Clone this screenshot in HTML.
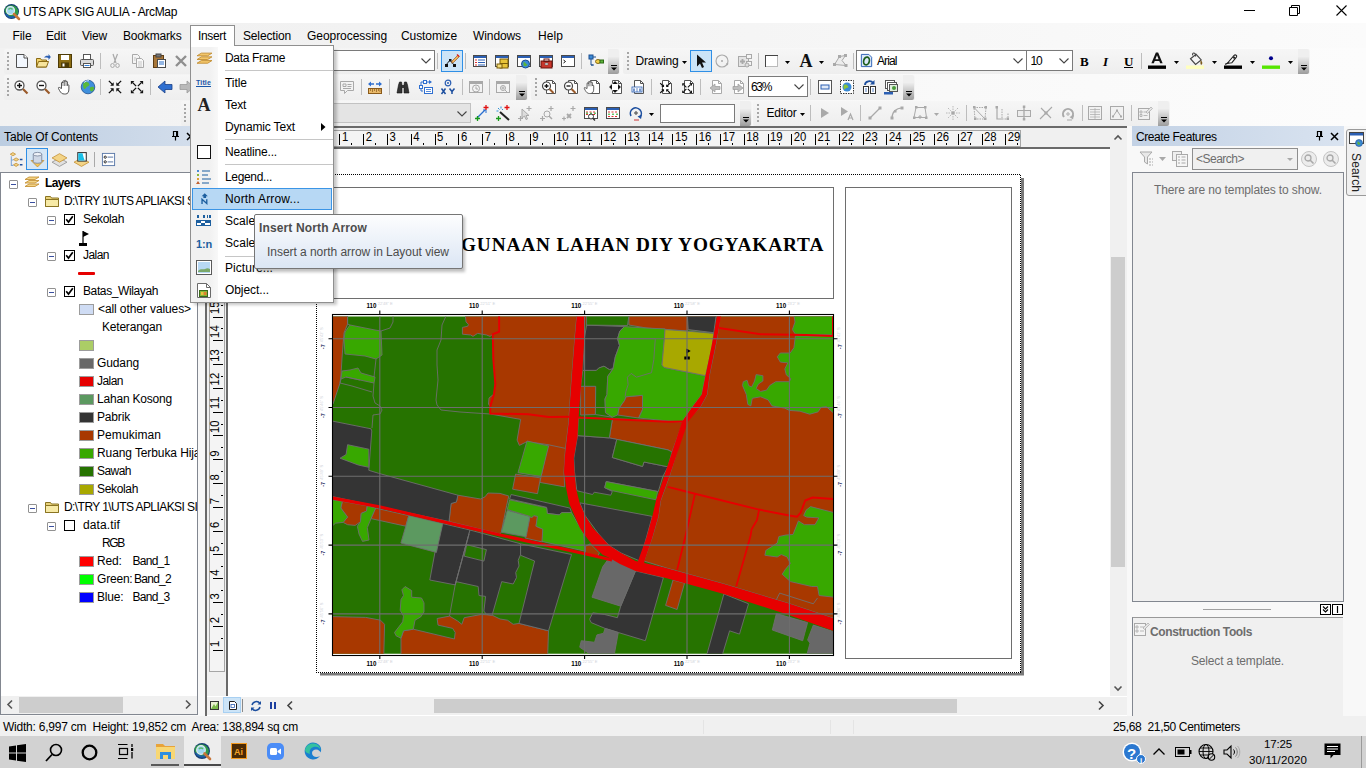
<!DOCTYPE html>
<html lang="en">
<head>
<meta charset="utf-8">
<title>UTS APK SIG AULIA - ArcMap</title>
<style>
*{box-sizing:border-box;margin:0;padding:0}
html,body{width:1366px;height:768px;overflow:hidden;background:#f0f0f0;font-family:"Liberation Sans","DejaVu Sans",sans-serif;font-size:12px;color:#000}
#app{position:relative;width:1366px;height:768px;overflow:hidden;background:#f8f8f8}
.a{position:absolute}
.x{position:absolute;white-space:pre}
svg{overflow:visible}
</style>
</head>
<body>
<div id="app">
<!-- chrome -->
<div class="a" style="left:0px;top:0px;width:1366px;height:23px;background:#fff;"></div>
<svg class="a" style="left:3px;top:3px;" width="18" height="18" viewBox="0 0 18 18"><circle cx="8.500" cy="8.500" r="7.500" fill="#173f73"/><path d="M2.500 5c2-2.500 6-3.500 9-2 2 1 3 2.500 3.500 4 .8 3 0 5-2.500 6-3 1.500-6 1-8-1S.500 8 2.500 5z" fill="#2f9a4a"/><path d="M3 11c2 3 5.500 4 8.500 2.500" stroke="#1d5fa8" stroke-width="2" fill="none"/><circle cx="7.500" cy="7.500" r="4" fill="#9fd8f2" stroke="#e4ebef" stroke-width="1.200"/><path d="M5.500 6.500c1-1.500 3-1.500 4 0" stroke="#5ab86a" stroke-width="1.400" fill="none"/><path d="M11 11l5 5" stroke="#c8763a" stroke-width="2.500" stroke-linecap="round"/></svg>
<div class="x" style="left:23.0px;top:4.24px;font-size:12px;line-height:17px;letter-spacing:-0.336px;">UTS APK SIG AULIA - ArcMap</div>
<svg class="a" style="left:1244px;top:10px;" width="11" height="1" viewBox="0 0 11 1"><rect width="11" height="1" fill="#000"/></svg>
<svg class="a" style="left:1289px;top:5px;" width="12" height="12" viewBox="0 0 12 12"><path d="M.5 2.500h8v8h-8z" fill="none" stroke="#000"/><path d="M2.500 2.500v-2h8v8h-2" fill="none" stroke="#000"/></svg>
<svg class="a" style="left:1336px;top:5px;" width="11" height="11" viewBox="0 0 11 11"><path d="M.5.500l10 10M10.500.500l-10 10" stroke="#000" stroke-width="1.100"/></svg>
<div class="a" style="left:0px;top:23px;width:1366px;height:25px;background:linear-gradient(90deg,#f0f0f0,#f3f3f3 40%,#fbfbfb);"></div>
<div class="x" style="left:12.5px;top:28.24px;font-size:12px;line-height:17px;letter-spacing:-0.084px;">File</div>
<div class="x" style="left:46.0px;top:28.24px;font-size:12px;line-height:17px;letter-spacing:-0.170px;">Edit</div>
<div class="x" style="left:82.0px;top:28.24px;font-size:12px;line-height:17px;letter-spacing:-0.199px;">View</div>
<div class="x" style="left:123.0px;top:28.24px;font-size:12px;line-height:17px;letter-spacing:-0.169px;">Bookmarks</div>
<div class="x" style="left:243.0px;top:28.24px;font-size:12px;line-height:17px;letter-spacing:-0.152px;">Selection</div>
<div class="x" style="left:307.0px;top:28.24px;font-size:12px;line-height:17px;letter-spacing:-0.055px;">Geoprocessing</div>
<div class="x" style="left:401.0px;top:28.24px;font-size:12px;line-height:17px;letter-spacing:-0.076px;">Customize</div>
<div class="x" style="left:473.0px;top:28.24px;font-size:12px;line-height:17px;letter-spacing:-0.097px;">Windows</div>
<div class="x" style="left:538.0px;top:28.24px;font-size:12px;line-height:17px;letter-spacing:0.080px;">Help</div>
<div class="a" style="left:0px;top:48px;width:1366px;height:78px;background:linear-gradient(90deg,#f2f2f2,#f6f6f6 40%,#fcfcfc);"></div>
<div class="a" style="left:4px;top:49px;width:616px;height:25px;border-radius:2px;background:linear-gradient(#f6f6f6,#eeeeee);"></div>
<div class="a" style="left:7px;top:52px;width:2px;height:18px;background-image:repeating-linear-gradient(#a6a6a6 0 2px,transparent 2px 4px);"></div>
<svg class="a" style="left:13.5px;top:53px;" width="16" height="16" viewBox="0 0 16 16"><path d="M2.500 1.500h7.500l3.500 3.500v9.500h-11z" fill="#f2f7fe" stroke="#4f4f4f"/><path d="M10 1.500v3.500h3.500" fill="#fff" stroke="#4f4f4f"/></svg>
<svg class="a" style="left:35px;top:53px;" width="16" height="16" viewBox="0 0 16 16"><path d="M1.5 5.5h4l1 1.5h5v7h-10z" fill="#f1d26b" stroke="#8a6a14"/><path d="M1.5 14l2-5.5h10l-2 5.5z" fill="#f7e49c" stroke="#8a6a14"/><path d="M9 4.5c1.5-2 3-2.2 4.5-1.5v-2l2.3 3-2.3 3v-2c-1.5-.6-3-.5-4.500-.5z" fill="#2b5fb3"/></svg>
<svg class="a" style="left:57px;top:53px;" width="16" height="16" viewBox="0 0 16 16"><rect x="1.5" y="1.5" width="13" height="13" fill="#8d6e14" stroke="#4d3b07"/><rect x="4" y="2" width="8" height="5" fill="#fff"/><rect x="4" y="9.500" width="8" height="5" fill="#4d3b07"/><rect x="5.500" y="10.500" width="2" height="3" fill="#fff"/></svg>
<svg class="a" style="left:79px;top:53px;" width="16" height="16" viewBox="0 0 16 16"><rect x="4.500" y="1.500" width="7" height="5" fill="#fff" stroke="#555"/><rect x="1.500" y="6.500" width="13" height="6" rx="1" fill="#d9d9d9" stroke="#555"/><rect x="4.500" y="10.500" width="7" height="4" fill="#fff" stroke="#555"/><rect x="5.500" y="12" width="5" height="1" fill="#2b7bd6"/></svg>
<div class="a" style="left:100px;top:53px;width:1px;height:16px;background:#bdbdbd;"></div>
<svg class="a" style="left:107px;top:53px;" width="16" height="16" viewBox="0 0 16 16"><path d="M6 1l3 9M10.500 1l-3.500 9" stroke="#a9a9a9" fill="none" stroke-width="1.200"/><ellipse cx="5.500" cy="12.500" rx="1.800" ry="2" fill="none" stroke="#a9a9a9"/><ellipse cx="10.500" cy="12.500" rx="1.800" ry="2" fill="none" stroke="#a9a9a9"/></svg>
<svg class="a" style="left:130px;top:53px;" width="16" height="16" viewBox="0 0 16 16"><path d="M2.500 1.500h5l2 2v7h-7z" fill="#f4f4f4" stroke="#a9a9a9"/><path d="M6.500 5.500h5l2 2v7h-7z" fill="#f8f8f8" stroke="#a9a9a9"/><path d="M8 9h4M8 11h4M8 13h4M4 5h2M4 7h1.500" stroke="#b9b9b9" stroke-width=".800"/></svg>
<svg class="a" style="left:151px;top:53px;" width="16" height="16" viewBox="0 0 16 16"><rect x="2.500" y="2.500" width="10" height="12" fill="#a8773a" stroke="#5e3d14"/><rect x="5" y="1" width="5" height="3" fill="#777" stroke="#444"/><rect x="6.500" y="6.500" width="8" height="8" fill="#fff" stroke="#4a4a4a"/><path d="M8 9h5M8 11h5" stroke="#2b6fc9"/></svg>
<svg class="a" style="left:173px;top:53px;" width="16" height="16" viewBox="0 0 16 16"><path d="M3 3l10 10M13 3l-10 10" stroke="#8f8f8f" stroke-width="2.400"/></svg>
<div class="a" style="left:250px;top:50px;width:185px;height:21px;background:#fff;border:1px solid #7a7a7a;"></div>
<svg class="a" style="left:421px;top:58px;" width="10" height="6" viewBox="0 0 10 6"><path d="M.5.500l4.500 4.500 4.500-4.500" fill="none" stroke="#444" stroke-width="1.100"/></svg>
<div class="a" style="left:437px;top:53px;width:1px;height:16px;background:#bdbdbd;"></div>
<div class="a" style="left:441px;top:50px;width:22px;height:22px;background:#cce4f7;border:1px solid #2f8fe6;"></div>
<svg class="a" style="left:444px;top:53px;" width="16" height="16" viewBox="0 0 16 16"><path d="M2 12l4-5 4 5" fill="none" stroke="#222"/><rect x="1" y="11" width="3" height="3" fill="#111"/><rect x="5" y="6" width="2.500" height="2.500" fill="#111"/><rect x="9" y="11" width="3" height="3" fill="#111"/><path d="M8 8l6-6 1.500 1.500-6 6-2 .6z" fill="#f0b35a" stroke="#8a4a1a" stroke-width=".600"/><path d="M13 1.500l2 2" stroke="#d22" stroke-width="1.500"/></svg>
<div class="a" style="left:465px;top:53px;width:1px;height:16px;background:#bdbdbd;"></div>
<svg class="a" style="left:472px;top:53px;" width="16" height="16" viewBox="0 0 16 16"><rect x="1.5" y="2.5" width="13" height="11" fill="#fff" stroke="#4a4a4a"/><rect x="2" y="3" width="12" height="2" fill="#2b5fb3"/><path d="M3 7h2M3 9.500h2M3 12h2" stroke="#d33"/><path d="M6 7h7M6 9.500h7M6 12h7" stroke="#2b5fb3"/></svg>
<svg class="a" style="left:494px;top:53px;" width="16" height="16" viewBox="0 0 16 16"><rect x="1.5" y="2.5" width="13" height="11" fill="#fff" stroke="#4a4a4a"/><rect x="2" y="3" width="12" height="2" fill="#2b5fb3"/><rect x="6" y="6" width="8" height="9" fill="#e8c43a" stroke="#7a5d08"/><path d="M6 10.500h8" stroke="#7a5d08"/><rect x="3" y="11" width="5" height="4" fill="#f3dc7a" stroke="#7a5d08"/></svg>
<svg class="a" style="left:516px;top:53px;" width="16" height="16" viewBox="0 0 16 16"><rect x="1.5" y="2.5" width="13" height="11" fill="#fff" stroke="#4a4a4a"/><rect x="2" y="3" width="12" height="2" fill="#2b5fb3"/><circle cx="9.500" cy="11" r="4" fill="#3a8ad6" stroke="#1d4f8f"/><path d="M7.500 9c2 0 2 2 4 2.500-1 2-3 2-4 1z" fill="#5db53a"/></svg>
<svg class="a" style="left:538px;top:53px;" width="16" height="16" viewBox="0 0 16 16"><rect x="1.5" y="2.5" width="13" height="11" fill="#fff" stroke="#4a4a4a"/><rect x="2" y="3" width="12" height="2" fill="#2b5fb3"/><rect x="3" y="8" width="11" height="7" fill="#c8352b" stroke="#6b120d"/><rect x="6" y="6" width="5" height="2.500" fill="none" stroke="#6b120d"/><rect x="7" y="10" width="3" height="2" fill="#ddd" stroke="#555" stroke-width=".500"/></svg>
<svg class="a" style="left:560px;top:53px;" width="16" height="16" viewBox="0 0 16 16"><rect x="1.5" y="2.5" width="13" height="11" fill="#fff" stroke="#4a4a4a"/><rect x="2" y="3" width="12" height="2" fill="#2b5fb3"/><path d="M3.500 7l2 1.500-2 1.500" fill="none" stroke="#111"/></svg>
<div class="a" style="left:581px;top:53px;width:1px;height:16px;background:#bdbdbd;"></div>
<svg class="a" style="left:588px;top:53px;" width="16" height="16" viewBox="0 0 16 16"><rect x="1" y="2" width="4" height="4" fill="#3a8ad6" stroke="#1d4f8f"/><path d="M3 6v6h3M5 4h3" stroke="#1d4f8f" fill="none"/><ellipse cx="10" cy="8.500" rx="2.500" ry="2" fill="#f0cf4a" stroke="#8a6a14"/><rect x="12" y="7" width="3.500" height="3" fill="#5db53a" stroke="#2d6a15"/><path d="M3 12h2" stroke="#1d4f8f"/></svg>
<div class="a" style="left:608px;top:49px;width:11px;height:25px;background:linear-gradient(#efefef 30%,#9c9c9c);border-radius:0 2px 2px 0;"></div><svg class="a" style="left:610px;top:64px;" width="8" height="8" viewBox="0 0 8 8"><path d="M1 1.500h6" stroke="#000"/><path d="M1 3.500h6l-3 3z" fill="#000"/></svg>
<div class="a" style="left:623px;top:49px;width:687px;height:25px;border-radius:2px;background:linear-gradient(#f6f6f6,#eeeeee);"></div>
<div class="a" style="left:627px;top:52px;width:2px;height:18px;background-image:repeating-linear-gradient(#a6a6a6 0 2px,transparent 2px 4px);"></div>
<div class="x" style="left:635.5px;top:53.24px;font-size:12px;line-height:17px;letter-spacing:-0.145px;">Drawing</div>
<svg class="a" style="left:681.5px;top:60.5px;" width="5" height="3" viewBox="0 0 5 3"><path d="M0 0h5l-2.500 3z" fill="#000"/></svg>
<div class="a" style="left:690px;top:50px;width:22px;height:22px;background:#cce4f7;border:1px solid #2f8fe6;"></div>
<svg class="a" style="left:693px;top:53px;" width="16" height="16" viewBox="0 0 16 16"><path d="M4 1.500v12l3-3 2 4.500 2-1-2-4.500h4z" fill="#111"/></svg>
<svg class="a" style="left:714px;top:53px;" width="16" height="16" viewBox="0 0 16 16"><circle cx="8" cy="8" r="6" fill="none" stroke="#a9a9a9" stroke-width="1.100"/><circle cx="8" cy="8" r="1" fill="#a9a9a9"/><path d="M12 10l2.500.5-1 2z" fill="#a9a9a9"/></svg>
<svg class="a" style="left:737px;top:53px;" width="16" height="16" viewBox="0 0 16 16"><rect x="1.500" y="3.500" width="10" height="10" fill="#e4e4e4" stroke="#a9a9a9"/><path d="M3 8.500h5M5.500 6v5" stroke="#a9a9a9" stroke-width="1.800"/><rect x="9.500" y="1.500" width="5" height="4" fill="#f4f4f4" stroke="#a9a9a9"/><rect x="9.500" y="8.500" width="5" height="4" fill="#f4f4f4" stroke="#a9a9a9"/><circle cx="10" cy="12" r="2" fill="#ddd" stroke="#a9a9a9"/></svg>
<div class="a" style="left:758px;top:53px;width:1px;height:16px;background:#bdbdbd;"></div>
<svg class="a" style="left:764px;top:53px;" width="16" height="16" viewBox="0 0 16 16"><rect x="1.500" y="2.500" width="12" height="11" fill="#fff" stroke="#444"/><path d="M2 13.500h12M13.500 3v10.500" stroke="#bbb"/></svg>
<svg class="a" style="left:785px;top:60.5px;" width="5" height="3" viewBox="0 0 5 3"><path d="M0 0h5l-2.500 3z" fill="#000"/></svg>
<div class="x" style="left:799.5px;top:49.16px;font-size:18px;line-height:25px;letter-spacing:0.001px;font-weight:bold;color:#111;font-family:'Liberation Serif',serif;">A</div>
<svg class="a" style="left:819px;top:60.5px;" width="5" height="3" viewBox="0 0 5 3"><path d="M0 0h5l-2.500 3z" fill="#000"/></svg>
<svg class="a" style="left:832px;top:53px;" width="16" height="16" viewBox="0 0 16 16"><path d="M2.500 11.500l5-8 6-1-3.500 5 4 5z" fill="#ececec" stroke="#a9a9a9"/><rect x="1" y="10" width="3" height="3" fill="#a9a9a9"/><rect x="6" y="2" width="3" height="3" fill="#a9a9a9"/><rect x="12" y="1" width="3" height="3" fill="#a9a9a9"/><rect x="12.500" y="11" width="3" height="3" fill="#a9a9a9"/></svg>
<div class="a" style="left:853px;top:53px;width:1px;height:16px;background:#bdbdbd;"></div>
<div class="a" style="left:856px;top:50px;width:172px;height:21px;background:#fff;border:1px solid #7a7a7a;"></div>
<svg class="a" style="left:858.5px;top:53px;" width="15" height="15" viewBox="0 0 16 16"><path d="M2.500 1.500h8l3 3v10h-11z" fill="#dbe8fb" stroke="#2b5fb3"/><ellipse cx="8" cy="8.500" rx="3" ry="4.200" fill="none" stroke="#1e5e1e" stroke-width="1.800" transform="rotate(15 8 8.500)"/></svg>
<div class="x" style="left:877.0px;top:53.24px;font-size:12px;line-height:17px;letter-spacing:-0.902px;">Arial</div>
<svg class="a" style="left:1013px;top:58px;" width="10" height="6" viewBox="0 0 10 6"><path d="M.5.500l4.500 4.500 4.500-4.500" fill="none" stroke="#444" stroke-width="1.100"/></svg>
<div class="a" style="left:1026px;top:50px;width:47px;height:21px;background:#fff;border:1px solid #7a7a7a;"></div>
<div class="x" style="left:1030.5px;top:53.24px;font-size:12px;line-height:17px;letter-spacing:-1.174px;">10</div>
<svg class="a" style="left:1059px;top:58px;" width="10" height="6" viewBox="0 0 10 6"><path d="M.5.500l4.500 4.500 4.500-4.500" fill="none" stroke="#444" stroke-width="1.100"/></svg>
<div class="x" style="left:1080.0px;top:53.40px;font-size:13px;line-height:18px;letter-spacing:-0.171px;font-weight:bold;font-family:'Liberation Serif',serif;">B</div>
<div class="x" style="left:1103.0px;top:53.40px;font-size:13px;line-height:18px;letter-spacing:-0.059px;font-weight:bold;font-style:italic;font-family:'Liberation Serif',serif;">I</div>
<div class="x" style="left:1124.0px;top:53.40px;font-size:13px;line-height:18px;letter-spacing:-0.388px;font-weight:bold;font-family:'Liberation Serif',serif;text-decoration:underline;">U</div>
<div class="a" style="left:1141px;top:53px;width:1px;height:16px;background:#bdbdbd;"></div>
<svg class="a" style="left:1148px;top:52px;" width="18" height="18" viewBox="0 0 16 16"><path d="M3 10h2.200l.8-2h4l.8 2H13L9 0.500H7zM6.600 6.400L8 2.800l1.400 3.600z" fill="#111"/><rect x="0" y="12" width="16" height="3" fill="#000"/></svg>
<svg class="a" style="left:1173.5px;top:60.5px;" width="5" height="3" viewBox="0 0 5 3"><path d="M0 0h5l-2.500 3z" fill="#000"/></svg>
<svg class="a" style="left:1186px;top:52px;" width="18" height="18" viewBox="0 0 16 16"><path d="M4 6l5-4 4.500 5-5 4z" fill="#f4f4f4" stroke="#444"/><path d="M6 3c-1-3 3-3 2.500 1" fill="none" stroke="#444"/><path d="M13 7c1.500 1.500 2 3 1 4s-1.500-1-1-4z" fill="#7a5a1a"/><rect x="0" y="12" width="16" height="3" fill="#ffffbe"/></svg>
<svg class="a" style="left:1211.5px;top:60.5px;" width="5" height="3" viewBox="0 0 5 3"><path d="M0 0h5l-2.500 3z" fill="#000"/></svg>
<svg class="a" style="left:1224px;top:52px;" width="18" height="18" viewBox="0 0 16 16"><path d="M3 10l6-7c1-1 3 0 2 1.500l-4 5z" fill="#fff" stroke="#222"/><circle cx="9" cy="5" r="1" fill="#222"/><path d="M1 11l3-1.500" stroke="#222"/><rect x="0" y="12" width="16" height="3" fill="#000"/></svg>
<svg class="a" style="left:1249.5px;top:60.5px;" width="5" height="3" viewBox="0 0 5 3"><path d="M0 0h5l-2.500 3z" fill="#000"/></svg>
<svg class="a" style="left:1262px;top:52px;" width="18" height="18" viewBox="0 0 16 16"><circle cx="8" cy="5.500" r="1.800" fill="#00008b"/><rect x="0" y="12" width="16" height="3" fill="#55e600"/></svg>
<svg class="a" style="left:1287.5px;top:60.5px;" width="5" height="3" viewBox="0 0 5 3"><path d="M0 0h5l-2.500 3z" fill="#000"/></svg>
<div class="a" style="left:1298px;top:49px;width:11px;height:25px;background:linear-gradient(#efefef 30%,#9c9c9c);border-radius:0 2px 2px 0;"></div><svg class="a" style="left:1300px;top:64px;" width="8" height="8" viewBox="0 0 8 8"><path d="M1 1.500h6" stroke="#000"/><path d="M1 3.500h6l-3 3z" fill="#000"/></svg>
<div class="a" style="left:4px;top:75px;width:524px;height:25px;border-radius:2px;background:linear-gradient(#f6f6f6,#eeeeee);"></div>
<div class="a" style="left:7px;top:78px;width:2px;height:18px;background-image:repeating-linear-gradient(#a6a6a6 0 2px,transparent 2px 4px);"></div>
<svg class="a" style="left:12.5px;top:79px;" width="16" height="16" viewBox="0 0 16 16"><circle cx="6.500" cy="6.500" r="4.500" fill="#fff" stroke="#555" stroke-width="1.300"/><path d="M10 10l4.500 4.500" stroke="#9a5a2a" stroke-width="2.200"/><path d="M4 6.500h5M6.500 4v5" stroke="#111" stroke-width="1.400"/></svg>
<svg class="a" style="left:34.5px;top:79px;" width="16" height="16" viewBox="0 0 16 16"><circle cx="6.500" cy="6.500" r="4.500" fill="#fff" stroke="#555" stroke-width="1.300"/><path d="M10 10l4.500 4.500" stroke="#9a5a2a" stroke-width="2.200"/><path d="M4 6.500h5" stroke="#111" stroke-width="1.400"/></svg>
<svg class="a" style="left:56.5px;top:79px;" width="16" height="16" viewBox="0 0 16 16"><path d="M4.500 9.500V4c0-1 1.400-1 1.400 0V2.500c0-1 1.500-1 1.500 0V2c0-1 1.500-1 1.500 0v1c0-1 1.500-1 1.500 0v3.500c0-1 1.500-1 1.500 0V10c0 3-1 5-3.500 5h-1C5 15 4 14 2.500 11.500L1.500 9.500c-.5-1 .6-1.600 1.300-.8z" fill="#fff" stroke="#3f3f3f" stroke-width=".900"/><path d="M6 3v4M7.500 2.500v4.500M9 3v4" stroke="#3f3f3f" stroke-width=".600"/></svg>
<svg class="a" style="left:79.5px;top:79px;" width="16" height="16" viewBox="0 0 16 16"><circle cx="8" cy="8" r="6.800" fill="#3f8fdc" stroke="#1d4f8f" stroke-width=".800"/><path d="M3.500 4c2-1.500 4.500-1 5.500.5s0 2.500-1.500 3-2 3-3 2.500-2-4-1-6zM10 8.500c1-1 3.500-1 4 0s-1 4-2.500 4-2-3-1.500-4z" fill="#58b83a"/><path d="M4 3.500a6 6 0 0 1 5-1.800" stroke="#cfe6fb" fill="none"/></svg>
<div class="a" style="left:100px;top:79px;width:1px;height:16px;background:#bdbdbd;"></div>
<svg class="a" style="left:108px;top:80px;" width="14" height="14" viewBox="0 0 16 16"><path d="M1 1l4 4M15 1l-4 4M1 15l4-4M15 15l-4-4" stroke="#111" stroke-width="1.600"/><path d="M6.500 2.500v4h-4zM9.500 2.500v4h4zM6.500 13.500v-4h-4zM9.500 13.500v-4h4z" fill="#111"/></svg>
<svg class="a" style="left:130px;top:80px;" width="14" height="14" viewBox="0 0 16 16"><path d="M3 3l4 4M13 3l-4 4M3 13l4-4M13 13l-4-4" stroke="#111" stroke-width="1.600"/><path d="M1 5V1h4zM15 5V1h-4zM1 11v4h4zM15 11v4h-4z" fill="#111"/></svg>
<div class="a" style="left:150px;top:79px;width:1px;height:16px;background:#bdbdbd;"></div>
<svg class="a" style="left:157px;top:79px;" width="16" height="16" viewBox="0 0 16 16"><path d="M1 8l7-6v3.500h7v5H8V14z" fill="#2f6fd0" stroke="#1a3f86" stroke-width=".800"/></svg>
<svg class="a" style="left:179px;top:79px;" width="16" height="16" viewBox="0 0 16 16"><path d="M15 8l-7-6v3.500H1v5h7V14z" fill="#b9b9b9" stroke="#9a9a9a" stroke-width=".800"/></svg>
<svg class="a" style="left:339px;top:79px;" width="16" height="16" viewBox="0 0 16 16"><path d="M1.500 2.500h13v9h-6l-3 3v-3h-4z" fill="#f3f3f3" stroke="#a9a9a9"/><path d="M4 5h3v2.500H4zM8.500 5.500h4M8.500 7.500h4M4 9.500h8" stroke="#a9a9a9" fill="none"/></svg>
<div class="a" style="left:361px;top:79px;width:1px;height:16px;background:#bdbdbd;"></div>
<svg class="a" style="left:367px;top:79px;" width="16" height="16" viewBox="0 0 16 16"><rect x="1.500" y="9.500" width="13" height="5" fill="#e9b96a" stroke="#8a5a1a"/><path d="M3.500 10v2M5.500 10v3M7.500 10v2M9.500 10v3M11.500 10v2M13 10v3" stroke="#8a5a1a" stroke-width=".700"/><path d="M1 5l3-2.500v5zM15 5l-3-2.500v5z" fill="#2f6fd0"/><path d="M4 5h3M9 5h3" stroke="#2f6fd0" stroke-width="1.500"/></svg>
<div class="a" style="left:389px;top:79px;width:1px;height:16px;background:#bdbdbd;"></div>
<svg class="a" style="left:395px;top:79px;" width="16" height="16" viewBox="0 0 16 16"><path d="M2 14l1.500-8 1-3h2l.5 3v8zM14 14l-1.500-8-1-3h-2L9 6v8z" fill="#333" stroke="#111" stroke-width=".600"/><rect x="6.500" y="6" width="3" height="3" fill="#333"/></svg>
<svg class="a" style="left:418px;top:79px;" width="16" height="16" viewBox="0 0 16 16"><rect x="1.500" y="6.500" width="3" height="3" fill="#fff" stroke="#2f6fd0"/><rect x="5.500" y="1.500" width="3" height="3" fill="#fff" stroke="#2f6fd0"/><path d="M3 6.500V3h2.500M8.500 3h4M3 9.500V12h2" stroke="#2f6fd0" fill="none"/><path d="M11 1l3 2-3 2z" fill="#2f6fd0"/><rect x="6.500" y="8.500" width="8" height="6" fill="#fff" stroke="#2f6fd0"/><path d="M8 10.500h5M8 12.500h5" stroke="#2f6fd0" stroke-width=".800"/></svg>
<svg class="a" style="left:440px;top:79px;" width="16" height="16" viewBox="0 0 16 16"><circle cx="8" cy="4" r="2.800" fill="none" stroke="#2b5fb3" stroke-width="1.200"/><circle cx="8" cy="4" r="1" fill="#2b5fb3"/><path d="M1.500 9.500l4 5.500M5.500 9.500l-4 5.500M9.500 9.500l2.500 3 2.500-3M12 12.500V15" stroke="#1d4f9f" stroke-width="1.500" fill="none"/></svg>
<div class="a" style="left:462px;top:79px;width:1px;height:16px;background:#bdbdbd;"></div>
<svg class="a" style="left:468px;top:79px;" width="16" height="16" viewBox="0 0 16 16"><rect x="1.5" y="2.5" width="13" height="11" fill="#f3f3f3" stroke="#a9a9a9"/><rect x="2" y="3" width="12" height="2" fill="#a9a9a9"/><circle cx="8" cy="9.500" r="3.500" fill="#f3f3f3" stroke="#a9a9a9"/><path d="M8 7.500v2.500h2" stroke="#a9a9a9" fill="none"/></svg>
<div class="a" style="left:489px;top:79px;width:1px;height:16px;background:#bdbdbd;"></div>
<svg class="a" style="left:495px;top:79px;" width="16" height="16" viewBox="0 0 16 16"><rect x="1.5" y="2.5" width="13" height="11" fill="#f3f3f3" stroke="#a9a9a9"/><rect x="2" y="3" width="12" height="2" fill="#a9a9a9"/><circle cx="8" cy="9" r="2.500" fill="none" stroke="#a9a9a9"/><path d="M10 11l3 3M6.500 9h3M8 7.500v3" stroke="#a9a9a9"/></svg>
<div class="a" style="left:516px;top:75px;width:11px;height:25px;background:linear-gradient(#efefef 30%,#9c9c9c);border-radius:0 2px 2px 0;"></div><svg class="a" style="left:518px;top:90px;" width="8" height="8" viewBox="0 0 8 8"><path d="M1 1.500h6" stroke="#000"/><path d="M1 3.500h6l-3 3z" fill="#000"/></svg>
<div class="a" style="left:531px;top:75px;width:384px;height:25px;border-radius:2px;background:linear-gradient(#f6f6f6,#eeeeee);"></div>
<div class="a" style="left:535px;top:78px;width:2px;height:18px;background-image:repeating-linear-gradient(#a6a6a6 0 2px,transparent 2px 4px);"></div>
<svg class="a" style="left:541px;top:79px;" width="16" height="16" viewBox="0 0 16 16"><path d="M5.500 1.500h6l3 3v10h-9z" fill="#fff" stroke="#555"/><path d="M11.500 1.500v3h3" fill="none" stroke="#555"/><circle cx="5.500" cy="7" r="4" fill="#fff" stroke="#444" stroke-width="1.200"/><path d="M3.500 7h4M5.500 5v4" stroke="#111" stroke-width="1.300"/><path d="M8.500 10l4 4" stroke="#9a5a2a" stroke-width="2"/></svg>
<svg class="a" style="left:563px;top:79px;" width="16" height="16" viewBox="0 0 16 16"><path d="M5.500 1.500h6l3 3v10h-9z" fill="#fff" stroke="#555"/><path d="M11.500 1.500v3h3" fill="none" stroke="#555"/><circle cx="5.500" cy="7" r="4" fill="#fff" stroke="#444" stroke-width="1.200"/><path d="M3.500 7h4" stroke="#111" stroke-width="1.300"/><path d="M8.500 10l4 4" stroke="#9a5a2a" stroke-width="2"/></svg>
<svg class="a" style="left:585px;top:79px;" width="16" height="16" viewBox="0 0 16 16"><path d="M5.500 1.500h6l3 3v10h-9z" fill="#fff" stroke="#555"/><path d="M11.500 1.500v3h3" fill="none" stroke="#555"/><g transform="translate(-2,1) scale(.9)"><path d="M4.500 9.500V4c0-1 1.400-1 1.400 0V2.500c0-1 1.500-1 1.500 0V2c0-1 1.500-1 1.500 0v1c0-1 1.500-1 1.500 0v3.500c0-1 1.500-1 1.500 0V10c0 3-1 5-3.500 5h-1C5 15 4 14 2.500 11.500L1.500 9.500c-.5-1 .6-1.600 1.300-.8z" fill="#fff" stroke="#3f3f3f" stroke-width=".900"/><path d="M6 3v4M7.500 2.500v4.500M9 3v4" stroke="#3f3f3f" stroke-width=".600"/></g></svg>
<svg class="a" style="left:607px;top:79px;" width="16" height="16" viewBox="0 0 16 16"><path d="M5.500 1.500h6l3 3v10h-9z" fill="#fff" stroke="#555"/><path d="M11.500 1.500v3h3" fill="none" stroke="#555"/><circle cx="8" cy="8" r="4.500" fill="#fff" stroke="#777" stroke-width=".600"/><path d="M8 2l2.500 3h-5zM8 14l2.500-3h-5zM2 8l3-2.500v5zM14 8l-3-2.500v5z" fill="#111"/></svg>
<svg class="a" style="left:629px;top:79px;" width="16" height="16" viewBox="0 0 16 16"><path d="M5.500 1.500h6l3 3v10h-9z" fill="#fff" stroke="#555"/><path d="M11.500 1.500v3h3" fill="none" stroke="#555"/><rect x="3" y="8" width="10" height="5" fill="#fff" stroke="#2b5fb3" stroke-width=".800"/><path d="M5 9.500v3M11 9.500v3" stroke="#2b5fb3" stroke-width="1.300"/><circle cx="8" cy="10" r=".700" fill="#2b5fb3"/><circle cx="8" cy="12" r=".700" fill="#2b5fb3"/></svg>
<svg class="a" style="left:657px;top:79px;" width="16" height="16" viewBox="0 0 16 16"><path d="M5.500 1.500h6l3 3v10h-9z" fill="#fff" stroke="#555"/><path d="M11.500 1.500v3h3" fill="none" stroke="#555"/><g transform="translate(2.500,3.500) scale(.7)"><path d="M1 1l4 4M15 1l-4 4M1 15l4-4M15 15l-4-4" stroke="#111" stroke-width="1.600"/><path d="M6.500 2.500v4h-4zM9.500 2.500v4h4zM6.500 13.500v-4h-4zM9.500 13.500v-4h4z" fill="#111"/></g></svg>
<svg class="a" style="left:679px;top:79px;" width="16" height="16" viewBox="0 0 16 16"><path d="M5.500 1.500h6l3 3v10h-9z" fill="#fff" stroke="#555"/><path d="M11.500 1.500v3h3" fill="none" stroke="#555"/><g transform="translate(2.500,3.500) scale(.7)"><path d="M3 3l4 4M13 3l-4 4M3 13l4-4M13 13l-4-4" stroke="#111" stroke-width="1.600"/><path d="M1 5V1h4zM15 5V1h-4zM1 11v4h4zM15 11v4h-4z" fill="#111"/></g></svg>
<div class="a" style="left:651px;top:79px;width:1px;height:16px;background:#bdbdbd;"></div>
<div class="a" style="left:700px;top:79px;width:1px;height:16px;background:#bdbdbd;"></div>
<svg class="a" style="left:707px;top:79px;" width="16" height="16" viewBox="0 0 16 16"><path d="M5.500 1.500h6l3 3v10h-9z" fill="#fff" stroke="#a9a9a9"/><path d="M11.500 1.500v3h3" fill="none" stroke="#a9a9a9"/><path d="M3 9l5-4v2.500h5v3H8V13z" fill="#bdbdbd" stroke="#999" stroke-width=".700"/></svg>
<svg class="a" style="left:729px;top:79px;" width="16" height="16" viewBox="0 0 16 16"><path d="M5.500 1.500h6l3 3v10h-9z" fill="#fff" stroke="#a9a9a9"/><path d="M11.500 1.500v3h3" fill="none" stroke="#a9a9a9"/><path d="M14 9l-5-4v2.500H4v3h5V13z" fill="#bdbdbd" stroke="#999" stroke-width=".700"/></svg>
<div class="a" style="left:748px;top:76px;width:60px;height:21px;background:#fff;border:1px solid #7a7a7a;"></div>
<div class="x" style="left:751.0px;top:79.24px;font-size:12px;line-height:17px;letter-spacing:-1.339px;">63%</div>
<svg class="a" style="left:794px;top:83.5px;" width="10" height="6" viewBox="0 0 10 6"><path d="M.5.500l4.500 4.500 4.500-4.500" fill="none" stroke="#444" stroke-width="1.100"/></svg>
<div class="a" style="left:810px;top:79px;width:1px;height:16px;background:#bdbdbd;"></div>
<svg class="a" style="left:817px;top:79px;" width="16" height="16" viewBox="0 0 16 16"><rect x="1.500" y="1.500" width="13" height="13" fill="#fff" stroke="#555"/><rect x="4" y="6" width="8" height="4" fill="#dfe9f7" stroke="#2b5fb3"/></svg>
<svg class="a" style="left:839px;top:79px;" width="16" height="16" viewBox="0 0 16 16"><rect x="1.500" y="1.500" width="13" height="13" fill="#fff" stroke="#333" stroke-dasharray="1.500 1"/><circle cx="8" cy="8" r="4.500" fill="#3a8ad6"/><path d="M5 6c2-1 3 0 4 1s0 2-1.500 2-1 2-2 1.500-1.500-3-.5-4.500z" fill="#8ac53a"/></svg>
<svg class="a" style="left:861px;top:79px;" width="16" height="16" viewBox="0 0 16 16"><rect x="2.500" y="7.500" width="5" height="7" fill="#fff" stroke="#333"/><rect x="9.500" y="7.500" width="5" height="7" fill="#fff" stroke="#333"/><path d="M4 6c0-4 6-5 8-2" fill="none" stroke="#1d4f9f" stroke-width="1.800"/><path d="M13.500 1v4.500H9z" fill="#1d4f9f"/><path d="M4 10h2M4 12h2M11 10h2M11 12h2" stroke="#2b5fb3" stroke-width=".800"/></svg>
<svg class="a" style="left:883px;top:79px;" width="16" height="16" viewBox="0 0 16 16"><rect x="2.500" y="1.500" width="9" height="8" fill="#fff" stroke="#555"/><rect x="4.500" y="3.500" width="9" height="8" fill="#fff" stroke="#555"/><rect x="6.500" y="5.500" width="8" height="7" fill="#dfeedd" stroke="#555"/><circle cx="11" cy="9" r="2" fill="#4a9a3a"/><rect x="1" y="13" width="9" height="2.500" fill="#2b5fb3"/></svg>
<div class="a" style="left:903px;top:75px;width:11px;height:25px;background:linear-gradient(#efefef 30%,#9c9c9c);border-radius:0 2px 2px 0;"></div><svg class="a" style="left:905px;top:90px;" width="8" height="8" viewBox="0 0 8 8"><path d="M1 1.500h6" stroke="#000"/><path d="M1 3.500h6l-3 3z" fill="#000"/></svg>
<div class="a" style="left:181px;top:101px;width:571px;height:25px;border-radius:2px;background:linear-gradient(#f6f6f6,#eeeeee);"></div>
<div class="a" style="left:184px;top:104px;width:2px;height:18px;background-image:repeating-linear-gradient(#a6a6a6 0 2px,transparent 2px 4px);"></div>
<div class="a" style="left:300px;top:103px;width:171px;height:20px;background:#e4e4e4;border:1px solid #c2c2c2;"></div>
<svg class="a" style="left:457px;top:110.5px;" width="10" height="6" viewBox="0 0 10 6"><path d="M.5.500l4.500 4.500 4.500-4.500" fill="none" stroke="#444" stroke-width="1.100"/></svg>
<svg class="a" style="left:474px;top:105px;" width="16" height="16" viewBox="0 0 16 16"><path d="M3 13l8-8" stroke="#2b6fd0" stroke-width="1.300"/><path d="M9 5h3v3" fill="none" stroke="#2b6fd0"/><path d="M1 13.500h5M3.500 11v5" stroke="#1a9a1a" stroke-width="1.300"/><path d="M9.500 2.500h5M12 0v5" stroke="#e01010" stroke-width="1.300"/></svg>
<svg class="a" style="left:495px;top:105px;" width="16" height="16" viewBox="0 0 16 16"><path d="M5 7l9 8" stroke="#222" stroke-width="2"/><path d="M3 3l1.500 1.500M6 1.500v2M1.500 6h2M8 4l-1 1" stroke="#2b8fd6"/><path d="M1 13.500h5M3.500 11v5" stroke="#1a9a1a" stroke-width="1.300"/><path d="M9.500 2.500h5M12 0v5" stroke="#e01010" stroke-width="1.300"/></svg>
<svg class="a" style="left:517px;top:105px;" width="16" height="16" viewBox="0 0 16 16"><path d="M5 4v9l2.500-2 1.500 3.500 1.500-.5L9 10.500h3z" fill="#ddd" stroke="#a9a9a9"/><path d="M1 13.500h5M3.500 11v5M9.500 3.500h5M12 1v5" stroke="#a9a9a9" stroke-width="1.200"/></svg>
<svg class="a" style="left:539px;top:105px;" width="16" height="16" viewBox="0 0 16 16"><circle cx="8" cy="9" r="3" fill="none" stroke="#a9a9a9"/><path d="M10 11l3 3" stroke="#a9a9a9" stroke-width="1.500"/><path d="M1 13.500h5M3.500 11v5M9.500 3.500h5M12 1v5" stroke="#a9a9a9" stroke-width="1.200"/></svg>
<svg class="a" style="left:561px;top:105px;" width="16" height="16" viewBox="0 0 16 16"><path d="M6 9l4 4M10 9l-4 4" stroke="#a9a9a9" stroke-width="1.800"/><path d="M1 13.500h4M3 11.500v4M9.500 3.500h5M12 1v5" stroke="#a9a9a9" stroke-width="1.200"/></svg>
<svg class="a" style="left:583px;top:105px;" width="16" height="16" viewBox="0 0 16 16"><rect x="1.5" y="2.5" width="13" height="11" fill="#fff" stroke="#4a4a4a"/><rect x="2" y="3" width="12" height="2" fill="#2b5fb3"/><path d="M3 7h10M3 9.500h10" stroke="#d33" stroke-dasharray="2 1.500"/><path d="M3 8.200h10" stroke="#2a2" stroke-dasharray="2 2"/><circle cx="8" cy="11.500" r="2.500" fill="#fff" stroke="#333"/><path d="M10 13.500l2 2" stroke="#333" stroke-width="1.500"/></svg>
<svg class="a" style="left:605px;top:105px;" width="16" height="16" viewBox="0 0 16 16"><rect x="1.5" y="2.5" width="13" height="11" fill="#fff" stroke="#4a4a4a"/><rect x="2" y="3" width="12" height="2" fill="#2b5fb3"/><path d="M3 7h10M3 11.500h10" stroke="#d33" stroke-dasharray="2 1.500"/><path d="M3 9.200h10" stroke="#2a2" stroke-dasharray="2 2"/></svg>
<svg class="a" style="left:628px;top:105px;" width="16" height="16" viewBox="0 0 16 16"><path d="M3 11a5.500 5.500 0 1 1 9 1" fill="none" stroke="#1d4f9f" stroke-width="1.600"/><path d="M14 9.500l-1 4.500-3.500-2.500z" fill="#1d4f9f"/><circle cx="8" cy="8" r="1.200" fill="none" stroke="#333"/><path d="M6 15h5" stroke="#c33"/></svg>
<svg class="a" style="left:648.5px;top:112.5px;" width="5" height="3" viewBox="0 0 5 3"><path d="M0 0h5l-2.500 3z" fill="#000"/></svg>
<div class="a" style="left:660px;top:104px;width:75px;height:19px;background:#fff;border:1px solid #7a7a7a;"></div>
<div class="a" style="left:740px;top:101px;width:11px;height:25px;background:linear-gradient(#efefef 30%,#9c9c9c);border-radius:0 2px 2px 0;"></div><svg class="a" style="left:742px;top:116px;" width="8" height="8" viewBox="0 0 8 8"><path d="M1 1.500h6" stroke="#000"/><path d="M1 3.500h6l-3 3z" fill="#000"/></svg>
<div class="a" style="left:753px;top:101px;width:417px;height:25px;border-radius:2px;background:linear-gradient(#f6f6f6,#eeeeee);"></div>
<div class="a" style="left:757px;top:104px;width:2px;height:18px;background-image:repeating-linear-gradient(#a6a6a6 0 2px,transparent 2px 4px);"></div>
<div class="x" style="left:766.5px;top:105.24px;font-size:12px;line-height:17px;letter-spacing:-0.225px;">Editor</div>
<svg class="a" style="left:800px;top:112.5px;" width="5" height="3" viewBox="0 0 5 3"><path d="M0 0h5l-2.500 3z" fill="#000"/></svg>
<div class="a" style="left:810px;top:105px;width:1px;height:16px;background:#bdbdbd;"></div>
<svg class="a" style="left:817px;top:105px;" width="16" height="16" viewBox="0 0 16 16"><path d="M4 3l8 5-8 5z" fill="#a9a9a9"/></svg>
<svg class="a" style="left:839px;top:105px;" width="16" height="16" viewBox="0 0 16 16"><path d="M2 2l7 4.500-7 4.500z" fill="#a9a9a9"/><path d="M9 15l2.500-6 2.500 6M10 13h3" fill="none" stroke="#a9a9a9" stroke-width="1.200"/></svg>
<svg class="a" style="left:866.5px;top:105px;" width="16" height="16" viewBox="0 0 16 16"><path d="M3 13L13 3" stroke="#a9a9a9" stroke-width="1.200"/><rect x="1.500" y="11.500" width="3" height="3" fill="#a9a9a9"/><rect x="11.500" y="1.500" width="3" height="3" fill="#a9a9a9"/></svg>
<svg class="a" style="left:888.5px;top:105px;" width="16" height="16" viewBox="0 0 16 16"><path d="M3 13c0-6 4-10 10-10" fill="none" stroke="#a9a9a9" stroke-width="1.200"/><rect x="1.500" y="11.500" width="3" height="3" fill="#a9a9a9"/><rect x="11.500" y="1.500" width="3" height="3" fill="#a9a9a9"/><rect x="5" y="5" width="2.500" height="2.500" fill="#a9a9a9"/></svg>
<svg class="a" style="left:912px;top:105px;" width="16" height="16" viewBox="0 0 16 16"><path d="M4 2.500h9l1.500 10H2z" fill="none" stroke="#a9a9a9"/><rect x="3" y="1" width="2.500" height="2.500" fill="#a9a9a9"/><rect x="12" y="1" width="2.500" height="2.500" fill="#a9a9a9"/><rect x="1" y="11.500" width="2.500" height="2.500" fill="#a9a9a9"/><rect x="13" y="11.500" width="2.500" height="2.500" fill="#a9a9a9"/><path d="M6 12h4M8 10v4" stroke="#a9a9a9"/></svg>
<svg class="a" style="left:944.5px;top:105px;" width="16" height="16" viewBox="0 0 16 16"><path d="M8 1v14M1 8h14M3 3l10 10M13 3L3 13" stroke="#a9a9a9" stroke-width=".800" stroke-dasharray="1.500 1"/><rect x="6.500" y="6.500" width="3" height="3" fill="#a9a9a9"/></svg>
<svg class="a" style="left:972px;top:105px;" width="16" height="16" viewBox="0 0 16 16"><path d="M2 2.500h12L13 14H3z" fill="none" stroke="#a9a9a9" stroke-dasharray="1.500 1"/><path d="M2 2.500L13 14" stroke="#a9a9a9"/><rect x="1" y="1" width="2.500" height="2.500" fill="#a9a9a9"/><rect x="12.500" y="1" width="2.500" height="2.500" fill="#a9a9a9"/><rect x="2" y="12.500" width="2.500" height="2.500" fill="#a9a9a9"/><rect x="12" y="12.500" width="2.500" height="2.500" fill="#a9a9a9"/></svg>
<svg class="a" style="left:994px;top:105px;" width="16" height="16" viewBox="0 0 16 16"><path d="M3 2v12h5" fill="none" stroke="#a9a9a9" stroke-width="1.200"/><path d="M8 4v10h6V8" fill="none" stroke="#a9a9a9" stroke-dasharray="1.500 1"/><rect x="1.500" y="1" width="2.500" height="2.500" fill="#a9a9a9"/><rect x="12.500" y="12.500" width="2.500" height="2.500" fill="#a9a9a9"/></svg>
<svg class="a" style="left:1016px;top:105px;" width="16" height="16" viewBox="0 0 16 16"><rect x="1.500" y="5.500" width="13" height="6" fill="#ececec" stroke="#a9a9a9"/><path d="M8 1v14" stroke="#a9a9a9" stroke-width="1.300"/><rect x="6.800" y="0.500" width="2.500" height="2.500" fill="#a9a9a9"/><rect x="6.800" y="13" width="2.500" height="2.500" fill="#a9a9a9"/></svg>
<svg class="a" style="left:1038px;top:105px;" width="16" height="16" viewBox="0 0 16 16"><path d="M2 14L14 2M3 3l10 10" stroke="#a9a9a9" stroke-width="1.100"/><rect x="6.500" y="6.500" width="3" height="3" fill="#a9a9a9"/></svg>
<svg class="a" style="left:1060px;top:105px;" width="16" height="16" viewBox="0 0 16 16"><path d="M4 12a5 5 0 1 1 8 0" fill="none" stroke="#a9a9a9" stroke-width="2"/><path d="M14 10l-1 4.500-3.500-2.500z" fill="#a9a9a9"/><circle cx="8" cy="9" r="1.200" fill="none" stroke="#a9a9a9"/><path d="M7 15h5" stroke="#a9a9a9"/></svg>
<svg class="a" style="left:1087px;top:105px;" width="16" height="16" viewBox="0 0 16 16"><rect x="1.500" y="1.500" width="13" height="13" fill="#f1f1f1" stroke="#a9a9a9"/><path d="M3 4.500h10M3 7h10M3 9.500h10M3 12h10M8 3v11" stroke="#a9a9a9" stroke-width=".700"/></svg>
<svg class="a" style="left:1109px;top:105px;" width="16" height="16" viewBox="0 0 16 16"><rect x="1.500" y="1.500" width="13" height="13" fill="#f1f1f1" stroke="#a9a9a9"/><path d="M4 11.500l4-6 4 6" fill="none" stroke="#a9a9a9"/><rect x="3" y="10.500" width="2" height="2" fill="#a9a9a9"/><rect x="7" y="4.500" width="2" height="2" fill="#a9a9a9"/><rect x="11" y="10.500" width="2" height="2" fill="#a9a9a9"/></svg>
<svg class="a" style="left:1137px;top:105px;" width="16" height="16" viewBox="0 0 16 16"><rect x="1.500" y="3.500" width="11" height="11" fill="#f1f1f1" stroke="#a9a9a9"/><path d="M3 6h2v2H3zM3 9.500h2v2H3zM6.500 7h4M6.500 10.500h4" fill="none" stroke="#a9a9a9" stroke-width=".800"/><path d="M9 7l5-5 1.500 1.500-5 5z" fill="#e3e3e3" stroke="#a9a9a9" stroke-width=".700"/></svg>
<svg class="a" style="left:933.5px;top:112.5px;" width="5" height="3" viewBox="0 0 5 3"><path d="M0 0h5l-2.500 3z" fill="#a9a9a9"/></svg>
<div class="a" style="left:860px;top:105px;width:1px;height:16px;background:#bdbdbd;"></div>
<div class="a" style="left:966px;top:105px;width:1px;height:16px;background:#bdbdbd;"></div>
<div class="a" style="left:1082px;top:105px;width:1px;height:16px;background:#bdbdbd;"></div>
<div class="a" style="left:1131px;top:105px;width:1px;height:16px;background:#bdbdbd;"></div>
<div class="a" style="left:1158px;top:101px;width:11px;height:25px;background:linear-gradient(#efefef 30%,#9c9c9c);border-radius:0 2px 2px 0;"></div><svg class="a" style="left:1160px;top:116px;" width="8" height="8" viewBox="0 0 8 8"><path d="M1 1.500h6" stroke="#000"/><path d="M1 3.500h6l-3 3z" fill="#000"/></svg>
<!-- toc -->
<div class="a" style="left:0px;top:126px;width:198px;height:20px;background:linear-gradient(90deg,#bccde1,#d3deec);"></div>
<div class="x" style="left:4.0px;top:129.24px;font-size:12px;line-height:17px;letter-spacing:-0.121px;">Table Of Contents</div>
<svg class="a" style="left:171px;top:131px;" width="9" height="10" viewBox="0 0 9 10"><path d="M2.500 0.500h4v5h-4zM1 5.500h7M4.500 5.500v4" fill="none" stroke="#000" stroke-width="1.200"/><path d="M5.500 1v4" stroke="#000"/></svg>
<svg class="a" style="left:186px;top:132px;" width="9" height="9" viewBox="0 0 9 9"><path d="M1 1l7 7M8 1l-7 7" stroke="#000" stroke-width="1.500"/></svg>
<div class="a" style="left:0px;top:146px;width:198px;height:26px;background:#f0f0f0;"></div>
<div class="a" style="left:26px;top:148px;width:22px;height:22px;background:#d5e6f5;border:1px solid #2f8fe6;"></div>
<svg class="a" style="left:6px;top:150.5px;" width="17" height="17" viewBox="0 0 16 16"><path d="M4 3l2.500-1.500L9 3 6.500 4.500zM7 8l2.500-1.500L12 8 9.500 9.500zM7 13l2.500-1.500L12 13l-2.500 1.500z" fill="#f3d487" stroke="#c08a2a" stroke-width=".700"/><path d="M5 5v8.500h2M5 8.500h2" fill="none" stroke="#7fa5d6"/><path d="M13 8h2.500M13 13h2.500" stroke="#1d4f9f" stroke-width="1.500"/></svg>
<svg class="a" style="left:28.5px;top:150.5px;" width="17" height="17" viewBox="0 0 16 16"><path d="M2 9h12l-6 6z" fill="#f3c65a" stroke="#c08a2a" stroke-width=".700"/><path d="M4 3v7c0 2 8 2 8 0V3z" fill="#cfd8e6" stroke="#6a7890" stroke-width=".700"/><ellipse cx="8" cy="3" rx="4" ry="1.700" fill="#eef2f8" stroke="#6a7890" stroke-width=".700"/></svg>
<svg class="a" style="left:50.5px;top:150.5px;" width="17" height="17" viewBox="0 0 16 16"><path d="M1 10.500l7-4 7 4-7 4z" fill="#e0e0e0" stroke="#8a8a8a" stroke-width=".700"/><path d="M1 6.500l7-4 7 4-7 4z" fill="#f3d487" stroke="#c08a2a" stroke-width=".700"/></svg>
<svg class="a" style="left:72.5px;top:150.5px;" width="17" height="17" viewBox="0 0 16 16"><path d="M1 10.500l7-4 7 4-7 4z" fill="#f3d487" stroke="#c08a2a" stroke-width=".700"/><rect x="4.500" y="1.500" width="8" height="8" fill="#fff" stroke="#333"/><path d="M5 2h4l1 4 1 3H5z" fill="#19c0e8"/></svg>
<svg class="a" style="left:101px;top:151.5px;" width="15" height="15" viewBox="0 0 16 16"><rect x="1.500" y="1.500" width="13" height="13" fill="#fff" stroke="#5a78a8"/><circle cx="4.500" cy="5.500" r="1.200" fill="none" stroke="#222"/><circle cx="4.500" cy="10.500" r="1.200" fill="none" stroke="#222"/><path d="M7 5.500h6M7 10.500h6" stroke="#7f94b8" stroke-width="1.500"/></svg>
<div class="a" style="left:94px;top:152px;width:1px;height:15px;background:#a9a9a9;"></div>
<div class="a" style="left:0px;top:172px;width:198px;height:524px;background:#fff;border:1px solid #828790;border-bottom:none;"></div>
<div class="a" style="left:1px;top:696px;width:196px;height:18px;background:#f0f0f0;"></div>
<div class="a" style="left:0px;top:696px;width:1px;height:19px;background:#828790;"></div>
<div class="a" style="left:197px;top:696px;width:1px;height:19px;background:#828790;"></div>
<div class="a" style="left:0px;top:714px;width:198px;height:1px;background:#828790;"></div>
<div class="a" style="left:19px;top:697px;width:104px;height:16px;background:#cdcdcd;"></div>
<svg class="a" style="left:7px;top:700px;" width="6" height="9" viewBox="0 0 6 9"><path d="M5 .500l-4 4 4 4" fill="none" stroke="#555" stroke-width="1.600"/></svg>
<svg class="a" style="left:185px;top:700px;" width="6" height="9" viewBox="0 0 6 9"><path d="M1 .500l4 4-4 4" fill="none" stroke="#555" stroke-width="1.600"/></svg>
<div class="a" style="left:9px;top:180px;width:9px;height:9px;background:#fff;border:1px solid #919191;border-radius:1px;"><div class="a" style="left:1px;top:3px;width:5px;height:1px;background:#3a4fa0"></div></div>
<svg class="a" style="left:24px;top:175px;" width="16" height="16" viewBox="0 0 16 16"><path d="M1 11.500l4-2.500h10l-4 2.500zM1 8l4-2.500h10L11 8zM1 4.500L5 2h10l-4 2.500z" fill="#f3d487" stroke="#c08a2a" stroke-width=".800"/></svg>
<div class="x" style="left:45.0px;top:175.14px;font-size:12px;line-height:17px;letter-spacing:-0.616px;font-weight:bold;">Layers</div>
<div class="a" style="left:28px;top:198px;width:9px;height:9px;background:#fff;border:1px solid #919191;border-radius:1px;"><div class="a" style="left:1px;top:3px;width:5px;height:1px;background:#3a4fa0"></div></div>
<svg class="a" style="left:43.5px;top:193px;" width="16" height="16" viewBox="0 0 16 16"><path d="M1.500 3.500h5l1 1.500h7v8.500h-13z" fill="#e9d27a" stroke="#8a7422"/><path d="M1.500 6.500h13v7h-13z" fill="#f7eaa6" stroke="#8a7422"/></svg>
<div class="a" style="left:64px;top:193px;width:133px;height:16px;overflow:hidden;"><div class="x" style="left:0.0px;top:0.14px;font-size:12px;line-height:17px;letter-spacing:-0.571px;">D:\TRY 1\UTS APLIAKSI SIG</div></div>
<div class="a" style="left:47px;top:216px;width:9px;height:9px;background:#fff;border:1px solid #919191;border-radius:1px;"><div class="a" style="left:1px;top:3px;width:5px;height:1px;background:#3a4fa0"></div></div>
<div class="a" style="left:64px;top:214px;width:11px;height:11px;background:#fff;border:1px solid #000;"><svg class="a" style="left:0;top:0" width="9" height="9"><path d="M1.200 4.200l2.300 2.800L7.800 1.200" fill="none" stroke="#000" stroke-width="1.700"/></svg></div>
<div class="x" style="left:83.0px;top:211.14px;font-size:12px;line-height:17px;letter-spacing:-0.338px;">Sekolah</div>
<svg class="a" style="left:78px;top:229.5px;" width="12" height="17" viewBox="0 0 12 17"><path d="M5 1v13" stroke="#000" stroke-width="1.200"/><path d="M5 1l6 3-6 3z" fill="#000"/><rect x="1" y="13" width="8" height="3" fill="#000"/></svg>
<div class="a" style="left:47px;top:252px;width:9px;height:9px;background:#fff;border:1px solid #919191;border-radius:1px;"><div class="a" style="left:1px;top:3px;width:5px;height:1px;background:#3a4fa0"></div></div>
<div class="a" style="left:64px;top:250px;width:11px;height:11px;background:#fff;border:1px solid #000;"><svg class="a" style="left:0;top:0" width="9" height="9"><path d="M1.200 4.200l2.300 2.800L7.800 1.200" fill="none" stroke="#000" stroke-width="1.700"/></svg></div>
<div class="x" style="left:83.0px;top:247.14px;font-size:12px;line-height:17px;letter-spacing:-0.538px;">Jalan</div>
<div class="a" style="left:78px;top:272px;width:17px;height:2.5px;background:#e60000;border-radius:1px;"></div>
<div class="a" style="left:47px;top:288px;width:9px;height:9px;background:#fff;border:1px solid #919191;border-radius:1px;"><div class="a" style="left:1px;top:3px;width:5px;height:1px;background:#3a4fa0"></div></div>
<div class="a" style="left:64px;top:286px;width:11px;height:11px;background:#fff;border:1px solid #000;"><svg class="a" style="left:0;top:0" width="9" height="9"><path d="M1.200 4.200l2.300 2.800L7.800 1.200" fill="none" stroke="#000" stroke-width="1.700"/></svg></div>
<div class="x" style="left:83.0px;top:283.14px;font-size:12px;line-height:17px;letter-spacing:-0.388px;">Batas_Wilayah</div>
<div class="a" style="left:79px;top:303.5px;width:15px;height:11px;background:#cfdcf4;border:1px solid #9c9c9c;"></div>
<div class="x" style="left:98.0px;top:301.14px;font-size:12px;line-height:17px;letter-spacing:-0.096px;">&lt;all other values&gt;</div>
<div class="x" style="left:102.0px;top:319.14px;font-size:12px;line-height:17px;letter-spacing:-0.205px;">Keterangan</div>
<div class="a" style="left:79px;top:339.5px;width:15px;height:11px;background:#abcd66;border:1px solid #9c9c9c;"></div>
<div class="a" style="left:79px;top:357.5px;width:15px;height:11px;background:#686868;border:1px solid #9c9c9c;"></div>
<div class="x" style="left:97.0px;top:355.14px;font-size:12px;line-height:17px;letter-spacing:-0.117px;">Gudang</div>
<div class="a" style="left:79px;top:375.5px;width:15px;height:11px;background:#e60000;border:1px solid #9c9c9c;"></div>
<div class="x" style="left:97.0px;top:373.14px;font-size:12px;line-height:17px;letter-spacing:-0.538px;">Jalan</div>
<div class="a" style="left:79px;top:393.5px;width:15px;height:11px;background:#5c9960;border:1px solid #9c9c9c;"></div>
<div class="x" style="left:97.0px;top:391.14px;font-size:12px;line-height:17px;letter-spacing:-0.200px;">Lahan Kosong</div>
<div class="a" style="left:79px;top:411.5px;width:15px;height:11px;background:#343434;border:1px solid #9c9c9c;"></div>
<div class="x" style="left:97.0px;top:409.14px;font-size:12px;line-height:17px;letter-spacing:-0.169px;">Pabrik</div>
<div class="a" style="left:79px;top:429.5px;width:15px;height:11px;background:#a83800;border:1px solid #9c9c9c;"></div>
<div class="x" style="left:97.0px;top:427.14px;font-size:12px;line-height:17px;letter-spacing:0.071px;">Pemukiman</div>
<div class="a" style="left:79px;top:447.5px;width:15px;height:11px;background:#38a800;border:1px solid #9c9c9c;"></div>
<div class="a" style="left:97px;top:445px;width:100px;height:16px;overflow:hidden;"><div class="x" style="left:0.0px;top:0.14px;font-size:12px;line-height:17px;letter-spacing:-0.098px;">Ruang Terbuka Hijau</div></div>
<div class="a" style="left:79px;top:465.5px;width:15px;height:11px;background:#267300;border:1px solid #9c9c9c;"></div>
<div class="x" style="left:97.0px;top:463.14px;font-size:12px;line-height:17px;letter-spacing:-0.539px;">Sawah</div>
<div class="a" style="left:79px;top:483.5px;width:15px;height:11px;background:#a8a800;border:1px solid #9c9c9c;"></div>
<div class="x" style="left:97.0px;top:481.14px;font-size:12px;line-height:17px;letter-spacing:-0.338px;">Sekolah</div>
<div class="a" style="left:28px;top:504px;width:9px;height:9px;background:#fff;border:1px solid #919191;border-radius:1px;"><div class="a" style="left:1px;top:3px;width:5px;height:1px;background:#3a4fa0"></div></div>
<svg class="a" style="left:43.5px;top:499px;" width="16" height="16" viewBox="0 0 16 16"><path d="M1.500 3.500h5l1 1.500h7v8.500h-13z" fill="#e9d27a" stroke="#8a7422"/><path d="M1.500 6.500h13v7h-13z" fill="#f7eaa6" stroke="#8a7422"/></svg>
<div class="a" style="left:64px;top:499px;width:133px;height:16px;overflow:hidden;"><div class="x" style="left:0.0px;top:0.14px;font-size:12px;line-height:17px;letter-spacing:-0.571px;">D:\TRY 1\UTS APLIAKSI SIG</div></div>
<div class="a" style="left:47px;top:522px;width:9px;height:9px;background:#fff;border:1px solid #919191;border-radius:1px;"><div class="a" style="left:1px;top:3px;width:5px;height:1px;background:#3a4fa0"></div></div>
<div class="a" style="left:64px;top:520px;width:11px;height:11px;background:#fff;border:1px solid #000;"></div>
<div class="x" style="left:83.0px;top:517.14px;font-size:12px;line-height:17px;letter-spacing:0.122px;">data.tif</div>
<div class="x" style="left:102.0px;top:535.14px;font-size:12px;line-height:17px;letter-spacing:-1.335px;">RGB</div>
<div class="a" style="left:79px;top:555.5px;width:15px;height:11px;background:#ff0000;border:1px solid #9c9c9c;"></div>
<div class="x" style="left:97.0px;top:553.14px;font-size:12px;line-height:17px;letter-spacing:-.2px;">Red:</div>
<div class="x" style="left:132.5px;top:553.14px;font-size:12px;line-height:17px;letter-spacing:-0.729px;">Band_1</div>
<div class="a" style="left:79px;top:573.5px;width:15px;height:11px;background:#00ff00;border:1px solid #9c9c9c;"></div>
<div class="x" style="left:97.0px;top:571.14px;font-size:12px;line-height:17px;letter-spacing:-.2px;">Green:</div>
<div class="x" style="left:134.0px;top:571.14px;font-size:12px;line-height:17px;letter-spacing:-0.729px;">Band_2</div>
<div class="a" style="left:79px;top:591.5px;width:15px;height:11px;background:#0000ff;border:1px solid #9c9c9c;"></div>
<div class="x" style="left:97.0px;top:589.14px;font-size:12px;line-height:17px;letter-spacing:-.2px;">Blue:</div>
<div class="x" style="left:132.5px;top:589.14px;font-size:12px;line-height:17px;letter-spacing:-0.729px;">Band_3</div>
<!-- layout -->
<div class="a" style="left:205px;top:126px;width:922px;height:590px;background:#fff;"></div>
<div class="a" style="left:207px;top:128px;width:903px;height:19px;background:#f0f0f0;"></div>
<div class="a" style="left:316px;top:130px;width:704.5px;height:16.5px;background:#f4f4f4;border:1px solid #a6a6a6;"></div>
<div class="a" style="left:205px;top:126px;width:922px;height:2px;background:#6a6a6a;"></div>
<div class="a" style="left:207px;top:147px;width:903px;height:2px;background:#6a6a6a;"></div>
<svg class="a" style="left:0;top:0" width="1366" height="768"><rect x="339" y="134" width="1" height="11" fill="#000"/><rect x="351" y="143" width="1" height="2" fill="#000"/><text x="342.0" y="141.200" font-size="12" font-family="Liberation Sans, sans-serif" textLength="6.3" lengthAdjust="spacingAndGlyphs">1</text><rect x="363" y="134" width="1" height="11" fill="#000"/><rect x="375" y="143" width="1" height="2" fill="#000"/><text x="365.8" y="141.200" font-size="12" font-family="Liberation Sans, sans-serif" textLength="6.3" lengthAdjust="spacingAndGlyphs">2</text><rect x="387" y="134" width="1" height="11" fill="#000"/><rect x="399" y="143" width="1" height="2" fill="#000"/><text x="389.5" y="141.200" font-size="12" font-family="Liberation Sans, sans-serif" textLength="6.3" lengthAdjust="spacingAndGlyphs">3</text><rect x="411" y="134" width="1" height="11" fill="#000"/><rect x="423" y="143" width="1" height="2" fill="#000"/><text x="413.3" y="141.200" font-size="12" font-family="Liberation Sans, sans-serif" textLength="6.3" lengthAdjust="spacingAndGlyphs">4</text><rect x="435" y="134" width="1" height="11" fill="#000"/><rect x="446" y="143" width="1" height="2" fill="#000"/><text x="437.1" y="141.200" font-size="12" font-family="Liberation Sans, sans-serif" textLength="6.3" lengthAdjust="spacingAndGlyphs">5</text><rect x="458" y="134" width="1" height="11" fill="#000"/><rect x="470" y="143" width="1" height="2" fill="#000"/><text x="460.9" y="141.200" font-size="12" font-family="Liberation Sans, sans-serif" textLength="6.3" lengthAdjust="spacingAndGlyphs">6</text><rect x="482" y="134" width="1" height="11" fill="#000"/><rect x="494" y="143" width="1" height="2" fill="#000"/><text x="484.7" y="141.200" font-size="12" font-family="Liberation Sans, sans-serif" textLength="6.3" lengthAdjust="spacingAndGlyphs">7</text><rect x="506" y="134" width="1" height="11" fill="#000"/><rect x="518" y="143" width="1" height="2" fill="#000"/><text x="508.4" y="141.200" font-size="12" font-family="Liberation Sans, sans-serif" textLength="6.3" lengthAdjust="spacingAndGlyphs">8</text><rect x="530" y="134" width="1" height="11" fill="#000"/><rect x="542" y="143" width="1" height="2" fill="#000"/><text x="532.2" y="141.200" font-size="12" font-family="Liberation Sans, sans-serif" textLength="6.3" lengthAdjust="spacingAndGlyphs">9</text><rect x="554" y="134" width="1" height="11" fill="#000"/><rect x="565" y="143" width="1" height="2" fill="#000"/><text x="556.0" y="141.200" font-size="12" font-family="Liberation Sans, sans-serif" textLength="12.6" lengthAdjust="spacingAndGlyphs">10</text><rect x="577" y="134" width="1" height="11" fill="#000"/><rect x="589" y="143" width="1" height="2" fill="#000"/><text x="579.8" y="141.200" font-size="12" font-family="Liberation Sans, sans-serif" textLength="12.6" lengthAdjust="spacingAndGlyphs">11</text><rect x="601" y="134" width="1" height="11" fill="#000"/><rect x="613" y="143" width="1" height="2" fill="#000"/><text x="603.6" y="141.200" font-size="12" font-family="Liberation Sans, sans-serif" textLength="12.6" lengthAdjust="spacingAndGlyphs">12</text><rect x="625" y="134" width="1" height="11" fill="#000"/><rect x="637" y="143" width="1" height="2" fill="#000"/><text x="627.3" y="141.200" font-size="12" font-family="Liberation Sans, sans-serif" textLength="12.6" lengthAdjust="spacingAndGlyphs">13</text><rect x="649" y="134" width="1" height="11" fill="#000"/><rect x="661" y="143" width="1" height="2" fill="#000"/><text x="651.1" y="141.200" font-size="12" font-family="Liberation Sans, sans-serif" textLength="12.6" lengthAdjust="spacingAndGlyphs">14</text><rect x="672" y="134" width="1" height="11" fill="#000"/><rect x="684" y="143" width="1" height="2" fill="#000"/><text x="674.9" y="141.200" font-size="12" font-family="Liberation Sans, sans-serif" textLength="12.6" lengthAdjust="spacingAndGlyphs">15</text><rect x="696" y="134" width="1" height="11" fill="#000"/><rect x="708" y="143" width="1" height="2" fill="#000"/><text x="698.7" y="141.200" font-size="12" font-family="Liberation Sans, sans-serif" textLength="12.6" lengthAdjust="spacingAndGlyphs">16</text><rect x="720" y="134" width="1" height="11" fill="#000"/><rect x="732" y="143" width="1" height="2" fill="#000"/><text x="722.5" y="141.200" font-size="12" font-family="Liberation Sans, sans-serif" textLength="12.6" lengthAdjust="spacingAndGlyphs">17</text><rect x="744" y="134" width="1" height="11" fill="#000"/><rect x="756" y="143" width="1" height="2" fill="#000"/><text x="746.2" y="141.200" font-size="12" font-family="Liberation Sans, sans-serif" textLength="12.6" lengthAdjust="spacingAndGlyphs">18</text><rect x="768" y="134" width="1" height="11" fill="#000"/><rect x="779" y="143" width="1" height="2" fill="#000"/><text x="770.0" y="141.200" font-size="12" font-family="Liberation Sans, sans-serif" textLength="12.6" lengthAdjust="spacingAndGlyphs">19</text><rect x="791" y="134" width="1" height="11" fill="#000"/><rect x="803" y="143" width="1" height="2" fill="#000"/><text x="793.8" y="141.200" font-size="12" font-family="Liberation Sans, sans-serif" textLength="12.6" lengthAdjust="spacingAndGlyphs">20</text><rect x="815" y="134" width="1" height="11" fill="#000"/><rect x="827" y="143" width="1" height="2" fill="#000"/><text x="817.6" y="141.200" font-size="12" font-family="Liberation Sans, sans-serif" textLength="12.6" lengthAdjust="spacingAndGlyphs">21</text><rect x="839" y="134" width="1" height="11" fill="#000"/><rect x="851" y="143" width="1" height="2" fill="#000"/><text x="841.4" y="141.200" font-size="12" font-family="Liberation Sans, sans-serif" textLength="12.6" lengthAdjust="spacingAndGlyphs">22</text><rect x="863" y="134" width="1" height="11" fill="#000"/><rect x="875" y="143" width="1" height="2" fill="#000"/><text x="865.1" y="141.200" font-size="12" font-family="Liberation Sans, sans-serif" textLength="12.6" lengthAdjust="spacingAndGlyphs">23</text><rect x="886" y="134" width="1" height="11" fill="#000"/><rect x="898" y="143" width="1" height="2" fill="#000"/><text x="888.9" y="141.200" font-size="12" font-family="Liberation Sans, sans-serif" textLength="12.6" lengthAdjust="spacingAndGlyphs">24</text><rect x="910" y="134" width="1" height="11" fill="#000"/><rect x="922" y="143" width="1" height="2" fill="#000"/><text x="912.7" y="141.200" font-size="12" font-family="Liberation Sans, sans-serif" textLength="12.6" lengthAdjust="spacingAndGlyphs">25</text><rect x="934" y="134" width="1" height="11" fill="#000"/><rect x="946" y="143" width="1" height="2" fill="#000"/><text x="936.5" y="141.200" font-size="12" font-family="Liberation Sans, sans-serif" textLength="12.6" lengthAdjust="spacingAndGlyphs">26</text><rect x="958" y="134" width="1" height="11" fill="#000"/><rect x="970" y="143" width="1" height="2" fill="#000"/><text x="960.3" y="141.200" font-size="12" font-family="Liberation Sans, sans-serif" textLength="12.6" lengthAdjust="spacingAndGlyphs">27</text><rect x="982" y="134" width="1" height="11" fill="#000"/><rect x="993" y="143" width="1" height="2" fill="#000"/><text x="984.0" y="141.200" font-size="12" font-family="Liberation Sans, sans-serif" textLength="12.6" lengthAdjust="spacingAndGlyphs">28</text><rect x="1005" y="134" width="1" height="11" fill="#000"/><rect x="1017" y="143" width="1" height="2" fill="#000"/><text x="1007.8" y="141.200" font-size="12" font-family="Liberation Sans, sans-serif" textLength="12.6" lengthAdjust="spacingAndGlyphs">29</text></svg>
<div class="a" style="left:207px;top:128px;width:19px;height:568px;background:#f0f0f0;"></div>
<div class="a" style="left:208.5px;top:174px;width:16.5px;height:498px;background:#f4f4f4;border:1px solid #a6a6a6;"></div>
<div class="a" style="left:205px;top:126px;width:2px;height:590px;background:#6a6a6a;"></div>
<div class="a" style="left:225.5px;top:148px;width:2px;height:548px;background:#6a6a6a;"></div>
<svg class="a" style="left:0;top:0" width="1366" height="768"><defs><clipPath id="vr"><rect x="207" y="300" width="20" height="396"/></clipPath></defs><g clip-path="url(#vr)"><rect x="213" y="650" width="10" height="1" fill="#000"/><rect x="221" y="638" width="2" height="1" fill="#000"/><text transform="translate(219.400,647.0) rotate(-90)" font-size="12" font-family="Liberation Sans, sans-serif" textLength="6.3" lengthAdjust="spacingAndGlyphs">1</text><rect x="213" y="626" width="10" height="1" fill="#000"/><rect x="221" y="614" width="2" height="1" fill="#000"/><text transform="translate(219.400,623.2) rotate(-90)" font-size="12" font-family="Liberation Sans, sans-serif" textLength="6.3" lengthAdjust="spacingAndGlyphs">2</text><rect x="213" y="602" width="10" height="1" fill="#000"/><rect x="221" y="590" width="2" height="1" fill="#000"/><text transform="translate(219.400,599.5) rotate(-90)" font-size="12" font-family="Liberation Sans, sans-serif" textLength="6.3" lengthAdjust="spacingAndGlyphs">3</text><rect x="213" y="578" width="10" height="1" fill="#000"/><rect x="221" y="566" width="2" height="1" fill="#000"/><text transform="translate(219.400,575.7) rotate(-90)" font-size="12" font-family="Liberation Sans, sans-serif" textLength="6.3" lengthAdjust="spacingAndGlyphs">4</text><rect x="213" y="554" width="10" height="1" fill="#000"/><rect x="221" y="543" width="2" height="1" fill="#000"/><text transform="translate(219.400,551.9) rotate(-90)" font-size="12" font-family="Liberation Sans, sans-serif" textLength="6.3" lengthAdjust="spacingAndGlyphs">5</text><rect x="213" y="531" width="10" height="1" fill="#000"/><rect x="221" y="519" width="2" height="1" fill="#000"/><text transform="translate(219.400,528.1) rotate(-90)" font-size="12" font-family="Liberation Sans, sans-serif" textLength="6.3" lengthAdjust="spacingAndGlyphs">6</text><rect x="213" y="507" width="10" height="1" fill="#000"/><rect x="221" y="495" width="2" height="1" fill="#000"/><text transform="translate(219.400,504.3) rotate(-90)" font-size="12" font-family="Liberation Sans, sans-serif" textLength="6.3" lengthAdjust="spacingAndGlyphs">7</text><rect x="213" y="483" width="10" height="1" fill="#000"/><rect x="221" y="471" width="2" height="1" fill="#000"/><text transform="translate(219.400,480.6) rotate(-90)" font-size="12" font-family="Liberation Sans, sans-serif" textLength="6.3" lengthAdjust="spacingAndGlyphs">8</text><rect x="213" y="459" width="10" height="1" fill="#000"/><rect x="221" y="447" width="2" height="1" fill="#000"/><text transform="translate(219.400,456.8) rotate(-90)" font-size="12" font-family="Liberation Sans, sans-serif" textLength="6.3" lengthAdjust="spacingAndGlyphs">9</text><rect x="213" y="435" width="10" height="1" fill="#000"/><rect x="221" y="424" width="2" height="1" fill="#000"/><text transform="translate(219.400,433.0) rotate(-90)" font-size="12" font-family="Liberation Sans, sans-serif" textLength="12.6" lengthAdjust="spacingAndGlyphs">10</text><rect x="213" y="412" width="10" height="1" fill="#000"/><rect x="221" y="400" width="2" height="1" fill="#000"/><text transform="translate(219.400,409.2) rotate(-90)" font-size="12" font-family="Liberation Sans, sans-serif" textLength="12.6" lengthAdjust="spacingAndGlyphs">11</text><rect x="213" y="388" width="10" height="1" fill="#000"/><rect x="221" y="376" width="2" height="1" fill="#000"/><text transform="translate(219.400,385.4) rotate(-90)" font-size="12" font-family="Liberation Sans, sans-serif" textLength="12.6" lengthAdjust="spacingAndGlyphs">12</text><rect x="213" y="364" width="10" height="1" fill="#000"/><rect x="221" y="352" width="2" height="1" fill="#000"/><text transform="translate(219.400,361.7) rotate(-90)" font-size="12" font-family="Liberation Sans, sans-serif" textLength="12.6" lengthAdjust="spacingAndGlyphs">13</text><rect x="213" y="340" width="10" height="1" fill="#000"/><rect x="221" y="328" width="2" height="1" fill="#000"/><text transform="translate(219.400,337.9) rotate(-90)" font-size="12" font-family="Liberation Sans, sans-serif" textLength="12.6" lengthAdjust="spacingAndGlyphs">14</text><rect x="213" y="317" width="10" height="1" fill="#000"/><rect x="221" y="305" width="2" height="1" fill="#000"/><text transform="translate(219.400,314.1) rotate(-90)" font-size="12" font-family="Liberation Sans, sans-serif" textLength="12.6" lengthAdjust="spacingAndGlyphs">15</text></g></svg>
<div class="a" style="left:1110px;top:128px;width:17px;height:568px;background:#f0f0f0;"></div>
<div class="a" style="left:1111px;top:257px;width:14px;height:310px;background:#cdcdcd;"></div>
<svg class="a" style="left:1114px;top:134.5px;" width="8" height="5" viewBox="0 0 8 5"><path d="M.5 4.500l3.500-3.500 3.500 3.500" fill="none" stroke="#555" stroke-width="1.600"/></svg>
<svg class="a" style="left:1114px;top:685.5px;" width="8" height="5" viewBox="0 0 8 5"><path d="M.5 .500l3.500 3.500 3.500-3.500" fill="none" stroke="#555" stroke-width="1.600"/></svg>
<div class="a" style="left:207px;top:697px;width:920px;height:18px;background:#f0f0f0;"></div>
<div class="a" style="left:223px;top:697px;width:18px;height:16px;background:#cce4f7;border:1px solid #a8d0f2;"></div>
<svg class="a" style="left:210px;top:701px;" width="9" height="9" viewBox="0 0 9 9"><rect x=".500" y=".500" width="8" height="8" fill="#e8f0d0" stroke="#333"/><path d="M1 8l3-5 1.500 2.500L8 1v7z" fill="#7ab84a"/></svg>
<svg class="a" style="left:229px;top:700.5px;" width="8" height="9" viewBox="0 0 8 9"><path d="M.5.500h5l2 2v6h-7z" fill="#fff" stroke="#222"/><rect x="2" y="3.500" width="3.500" height="3" fill="none" stroke="#2b5fb3" stroke-width=".800"/></svg>
<div class="a" style="left:242px;top:699px;width:1px;height:13px;background:#8a8a8a;"></div>
<svg class="a" style="left:250px;top:700px;" width="11" height="11" viewBox="0 0 11 11"><path d="M2 5a4.500 4.500 0 0 1 8-1.500M10 7a4.500 4.500 0 0 1-8 1.500" fill="none" stroke="#1d4f9f" stroke-width="1.500"/><path d="M11 1v3.500H7.500zM1 11V7.500h3.500z" fill="#1d4f9f"/></svg>
<div class="a" style="left:270px;top:702px;width:2px;height:7px;background:#1d3f9f;"></div>
<div class="a" style="left:274px;top:702px;width:2px;height:7px;background:#1d3f9f;"></div>
<svg class="a" style="left:287px;top:701px;" width="6" height="9" viewBox="0 0 6 9"><path d="M5 .500l-4 4 4 4" fill="none" stroke="#444" stroke-width="1.600"/></svg>
<div class="a" style="left:434px;top:699px;width:523px;height:14px;background:#cdcdcd;"></div>
<svg class="a" style="left:1098px;top:701px;" width="6" height="9" viewBox="0 0 6 9"><path d="M1 .500l4 4-4 4" fill="none" stroke="#444" stroke-width="1.600"/></svg>
<svg class="a" style="left:0;top:0" width="1366" height="768"><path d="M1022.500 178v496H320" fill="none" stroke="#7a7a7a" stroke-width="3"/>
<rect x="316.500" y="174.500" width="704" height="498" fill="#fff" stroke="#000" stroke-width="1" stroke-dasharray="1 1" shape-rendering="crispEdges"/>
<rect x="332.500" y="187.500" width="501" height="111" fill="#fff" stroke="#6e6e6e"/>
<rect x="845.500" y="187.500" width="166" height="471" fill="#fff" stroke="#6e6e6e"/>
<rect x="332" y="314" width="502" height="341.500" fill="#fff"/><clipPath id="mc"><rect x="333" y="316.500" width="500" height="337.200"/></clipPath>
<g clip-path="url(#mc)" stroke="#6e6e6e" stroke-width=".900" stroke-linejoin="round" shape-rendering="auto">
<rect x="332" y="314" width="502" height="342" fill="#267300" stroke="none"/>
<polygon points="332,316 347.6,316 347.6,324 344,333 343,345 342,358 341,375 340,383 333,404 332,404" fill="#a83800"/>
<polygon points="465.4,316 499.4,316 499.1,331.8 492.8,334.3 490,336.4 486.6,335 477.5,333.4 473,336.4 470.7,335 462.4,334.2 462.4,327.4 467.7,326.3 468.4,324.3 466,322" fill="#a83800"/>
<polygon points="499.4,316 576.8,316 574.8,338.7 572.3,370.4 569.7,406.6 568.8,422 567,437 565.5,448.4 564,471.8 564.7,486.9 539.8,482.4 541.3,475.6 548.1,444.7 527,441.6 519.4,445.4 517.1,440.1 520.2,422 520.7,419.4 490.2,414 490.2,406.7 488.5,404 489,398 494,394 495.3,383.9 493.3,358.5 492.8,334.3 499.1,331.8" fill="#a83800"/>
<polygon points="515.6,474.1 540.5,477.9 537.5,493.7 512.6,489.2" fill="#a83800"/>
<polygon points="580.6,386.3 595.7,386.3 595.4,414.5 580.6,415" fill="#a83800"/>
<polygon points="625.9,396.8 642.5,395.3 642.5,409.7 638.7,418 617.6,415 619,408.2 624.4,400.6" fill="#a83800"/>
<polygon points="457.9,495.2 480.5,499 485,496.8 488,493 500,493.4 508.8,496 506.6,505.8 501.3,532.2 500,534 449,521.5 451.1,503.5 456.4,502" fill="#a83800"/>
<polygon points="342.3,501.3 367.3,505.8 366.5,511.1 361.2,513.4 360.5,521.7 355.2,525.4 347.6,524.7 343.1,522.4 347.6,517.1 340.8,508" fill="#a83800"/>
<polygon points="375.6,508.1 408.8,515.6 405.8,526.2 371,518.6" fill="#a83800"/>
<polygon points="530,516.4 531.5,517.9 533.8,515.6 537.5,516.4 536,526.2 542.8,529.2 542.5,542 525,538" fill="#a83800"/>
<polygon points="585.4,546.3 590.4,543.8 599.4,552.9 597.8,556.2 585.4,553.7" fill="#a83800"/>
<polygon points="332,616.6 365.7,617.4 380.5,620.2 384.6,624.3 383.8,655 332,655" fill="#a83800"/>
<polygon points="401,655 401,638.2 403.5,630.8 413.3,629.2 454.4,639 455.2,632.5 452.7,628.4 438,625.1 437.1,618.5 449.5,616.1 457.7,621 461.8,624.3 464.2,617.7 481.5,614.4 492.1,615.2 500,619 507.5,620.2 513.2,624.3 519,623.4 548.5,630.8 547.7,655" fill="#a83800"/>
<polygon points="628.9,316 834,316 834,655 834,618.5 789.6,603.8 723.9,584 668,568.5 644,561 652,538 658.3,516.4 660.6,500.5 669.3,476.4 686,422 700,407.4 707,394.6 709.3,375.7 716.9,338.7 720,316.8 716.1,316.8 713.8,332.7 688.2,329.6 686.6,331 665,329.3 647,328.1 628.9,325" fill="#a83800"/>
<polygon points="612.5,418.5 683,422 672,452 668,449.9 616.8,439.4 609.3,437.9" fill="#a83800"/>
<polygon points="673,580 684.5,583.2 677.1,609.5 665.6,605.4" fill="#a83800"/>
<polygon points="586.6,325.1 624.4,326.6 619.8,331.1 617.6,338.7 619.5,345.5 615.3,356.8 613,368.9 609.3,369.6 604,366.2 598.7,368.1 596.4,370.4 582.8,370.4 584.3,338.7" fill="#343434"/>
<polygon points="687.4,316 716.1,316 713.8,332.7 688.2,329.6" fill="#343434"/>
<polygon points="332,421 371,428.8 371.8,431 368.8,470.3 378.6,473.3 457.9,495.2 456.4,502 451.1,503.5 449,521.5 332,496.5" fill="#343434"/>
<polygon points="511.1,494.5 570,508.1 571.5,512.6 561.7,512.6 559.4,514.9 547.3,513.4 546.6,507.3 509.6,499" fill="#343434"/>
<polygon points="577.5,435.6 609.3,437.9 616.8,439.4 612.3,457.5 642.5,466.5 644,462 668,466.8 662.9,476.4 658.3,491.5 606.2,481.6 604.7,487.7 612.3,491.5 610.8,495.2 594.2,492.2 592.6,494.5 576.8,490.7 574.5,471.8 573.8,458.2" fill="#343434"/>
<polygon points="579.8,502.8 652.3,516.4 646.3,538 640,561 621,553 609.2,545.5 598.6,534 585.1,515.6" fill="#343434"/>
<polygon points="440.4,523 470,530 455.2,584.9 429.8,580" fill="#343434"/>
<polygon points="470,530 520.6,543.8 520.6,554.5 518.2,560.3 519,566 515.7,572.6 516.5,577.5 513.2,584 501.7,581.6 492.1,615.2 486.4,614.4 483.9,611.1 485.6,596.4 479,595.5 478.2,586.5 456,581.6 455.2,584.9" fill="#343434"/>
<polygon points="520.6,543.8 571.5,554.5 548.5,630.8 519,623.4 534.6,561 520.6,555.3" fill="#343434"/>
<polygon points="635.5,570.9 663.4,577.5 645.3,640.7 618.3,632.5 605.1,628.4 591.2,622.6 589.6,619.3 592.8,612.8 604.3,614.4 617.4,617.7 620.7,606.2" fill="#343434"/>
<polygon points="723.9,593.9 748.5,603.8 739.5,634.1 729.6,630.8 722.3,655 706.7,655" fill="#343434"/>
<polygon points="609.2,557.8 635.5,570.9 620.7,606.2 592,597.2 602.7,566.8" fill="#686868"/>
<polygon points="605.1,628.4 618.3,632.5 614.2,655 591.2,655 579.7,647.2 581.3,640.7 594.5,642.3 596.9,634.9 603.5,633.3" fill="#686868"/>
<polygon points="776.4,613.6 807.6,622.6 802.7,640.7 772.3,630" fill="#686868"/>
<polygon points="813.3,625.1 834,631.7 834,655 806.8,655 810,643.1 807.6,639.9" fill="#686868"/>
<polygon points="408.8,515.6 442.8,523.5 436.4,552.4 400.9,543 405.8,526.2" fill="#5c9960"/>
<polygon points="507.3,510.3 530,516.4 526.2,536.8 501.3,532.2" fill="#5c9960"/>
<polygon points="586.6,316 628.9,316 627.5,325.5 586.6,325.1" fill="#267300"/>
<polygon points="466.7,544.7 486.4,549.6 483.9,561.1 464.2,556.2" fill="#267300"/>
<polygon points="616.8,439.4 668,449.9 672,452 668,466.8 644,462 642.5,466.5 612.3,457.5" fill="#267300"/>
<polygon points="578.3,418 612.5,418.5 609.3,437.9 577.5,435.6" fill="#267300"/>
<polygon points="582.8,370.4 596.4,370.4 598.7,368.1 604,366.2 609.3,369.6 613,368.9 607.7,376.4 607,394.6 605,399 605.5,412.7 612.3,417.2 595.4,414.5 595.7,386.3 580.6,386.3" fill="#267300"/>
<polygon points="350,325 360,327 375,330 381,331 382,355 376,359 365,356 345,354 344,340 345,332" fill="#38a800"/>
<polygon points="342,371 350,370 358,368 361,373 375,377 374,383 360,380 346,377 341,379" fill="#38a800"/>
<polygon points="527,441 548.6,446 541,476.5 518,472.7" fill="#38a800"/>
<polygon points="347.6,444.7 368.8,449.2 368.8,467.3 358.2,465 340,458.2 346.1,454.5" fill="#38a800"/>
<polygon points="332,499.8 342.3,501.3 340.8,508 347.6,517.1 343.1,522.4 335.6,523.2 332,526.2" fill="#38a800"/>
<polygon points="367.3,505.8 375.6,508.1 371,518.6 367.3,527.7 369,540 362.5,541.4 359,534 357.4,526.2 360.5,521.7 361.2,513.4 366.5,511.1" fill="#38a800"/>
<polygon points="624.4,326.6 647,328.1 665.1,328.9 664.4,338.7 662,365 664,367.4 705.5,375.7 701.8,394.6 692,407.4 682,421.7 668,421 638.7,418 642.5,409.7 642.5,395.3 625.9,396.8 624.4,400.6 619,408.2 617.6,415 612.3,417.2 605.5,412.7 605,399 607,394.6 607.7,376.4 613,368.9 615.3,356.8 619.5,345.5 617.6,338.7 619.8,331.1" fill="#38a800"/>
<polygon points="794,316 834,316 834,334.9 795.4,334.2 792.4,329.6 795,322" fill="#38a800"/>
<polygon points="795.4,336 793.9,347.8 790.1,353 780.3,353 777.3,356.8 780.3,362.1 787.8,362.9 784.8,368.9 786.3,374.9 790.9,378.7 789.3,381.7 775.7,381.7 769.7,385.5 766.7,390 760.6,391.5 756.1,388.5 758.4,384 762.9,381 762.9,375.7 756.1,374.6 754.6,381 751.6,387 748.6,385.5 747.1,380.2 743.3,381.7 742.5,385.5 746.3,394.6 747.8,404.4 750.8,405.9 752.3,398.3 760.6,396.8 768.2,399.9 772,405.9 784.8,408.2 789.3,410.4 799.9,411.2 809.7,414.2 818,411.9 821,407.4 826.3,406.6 834,413.4 834,336" fill="#38a800"/>
<polygon points="606.2,481.6 657.6,491.5 656,499.8 612.3,490.7 604.7,487.7" fill="#38a800"/>
<polygon points="509.6,499.8 546.6,507.8 547.3,513.4 559.4,514.9 561.7,512.6 571.5,512.6 583.6,533.7 585,551.2 542,541.4 542.8,529.2 536,526.2 537.5,516.4 533.8,515.6 531.5,517.9 530,516.4 507.3,509.6" fill="#38a800"/>
<polygon points="405.1,586.5 411.7,590.6 411.7,597.2 421.5,598 424,602.9 424,612 420.7,616.9 415,620.2 413.3,629.2 403.5,630.8 401,638.2 396.1,635.8 394.5,632.5 402.7,621.8 403.5,616.1 400.2,610.3 401,599.6 403.5,595.5 401.9,589.8" fill="#38a800"/>
<polygon points="810.5,506.6 834,512.6 834,597.2 819.1,595.5 817.5,586.5 811.7,586.5 790.4,581.6 782.2,574.2 785.4,569.3 790.4,563.5 787.1,557 781.3,554.5 777.2,557 764.9,555.3 765.8,550.4 772.3,546.3 777.2,543 778.9,536.5 786,535 793,534.5 798.4,520.9 804.4,524.7 815,524.7 818.8,517.9 806.7,517.1 803.7,515.6 806,510.3" fill="#38a800"/>
<polygon points="665,329.6 686.6,331.1 713.8,333.4 712,347.8 705.5,375.7 664,367.4 662,365 664.4,338.7" fill="#a8a800"/>
<polygon points="576.8,316 574.8,338.7 572.3,370.4 569.7,406.6 568.8,422 567,437.1 564.7,458.2 564,471.8 566.2,488.4 569.2,503.5 574.5,515.6 579.8,527.7 585.4,536 592.8,545.5 603,555 609.2,557.8 620,564 635.5,571 664,577.5 723.9,593.9 789.6,615.2 834,631 834,618.5 789.6,603.8 723.9,584 664,567.6 635.5,561 621,553 609.2,545.5 598.6,534 592.6,527.7 585.1,515.6 579.8,503.5 576,488.4 574.5,471.8 573.8,458.2 577.5,437.1 578.3,422 579.4,406.6 582.4,370.4 584.3,338.7 585.9,316" fill="#e60000" stroke="none"/>
<polygon points="716.9,316 713,338.7 705.5,375.7 701.8,394.6 692,407.4 682,421.7 664,476.4 656,500.5 652.3,516.4 646.3,538 638,561 636,571 643,571 644.5,561 652.2,538 658.3,516.4 660.6,500.5 669.3,476.4 688,421.7 700,407.4 707,394.6 709.3,375.7 716.9,338.7 721,316" fill="#e60000" stroke="none"/>
<polyline points="347.6,316 347.6,324 350,325" fill="none"/>
<polyline points="381,331 390,328 393,322 393,316" fill="none"/>
<polyline points="376,359 374,377" fill="none"/>
<polyline points="374,383 373,396 375,403 380,406 382,410 380,414 373,415 372,428" fill="none"/>
<polyline points="341,379 340,383 352,386 372,392" fill="none"/>
<polyline points="346,377 360,380" fill="none"/>
<polyline points="446,316 442,325 441,340 437,350 437,365 438,380 436,400 437,405 441,410 460,412 490,414" fill="none"/>
<polyline points="469.1,534 455.2,584.9 449.5,616.1" fill="none"/>
<polyline points="779.7,593.1 813.3,603.8 817.5,598" fill="none"/>
<polyline points="779.7,593.1 776.4,599.6" fill="none"/>
<polyline points="655.3,338.7 653.8,359.8 651.5,372.7 636.4,377.2 631.2,373.4 627.4,377.2 628.1,384.7 625.9,391.5 625.1,396.8" fill="none"/>
<polyline points="548.1,444.7 565.5,448.4" fill="none"/>
<polyline points="617.6,338.7 655.3,338.7" fill="none"/>
<polyline points="332,498 379.3,506.8 500,535 585,553.7 612,560" fill="none" stroke="#e60000" stroke-width="3.2"/>
<polyline points="499.1,316 499.1,331.8 492.8,334.3 493.3,358.5 495.3,383.9 494,394 490.2,406.7 490.2,413.5 528.3,414.3 548.6,416.9 569,416.7" fill="none" stroke="#e60000" stroke-width="2"/>
<polyline points="578.3,417.4 668,421.7 684,421.5" fill="none" stroke="#e60000" stroke-width="2"/>
<polyline points="719.1,328.1 760.6,334.2 806,334.9 833,336" fill="none" stroke="#e60000" stroke-width="2"/>
<polyline points="833,316 833,336" fill="none" stroke="#e60000" stroke-width="2"/>
<polyline points="667.8,486.9 695,493.7 759.1,509.6 789.3,515.6 796.9,516.8 800.7,512.6 805.2,500.5 812.7,497.5 833.5,499" fill="none" stroke="#e60000" stroke-width="2"/>
<polyline points="695,493.7 685.5,536 677.1,570.1" fill="none" stroke="#e60000" stroke-width="1.8"/>
<polyline points="759.1,509.6 756.9,520.2 751.6,529.2 750.5,536 736.2,586.5" fill="none" stroke="#e60000" stroke-width="1.8"/>
<path d="M687 349v9" stroke="#000" stroke-width="1.200"/><path d="M686.500 348.500l4.200 2.500-4.200 2.500z" fill="#000" stroke="none"/><rect x="684.300" y="356.500" width="5.500" height="3" fill="#000" stroke="none"/>
<path d="M379.8 315V655M482.2 315V655M584.6 315V655M687 315V655M789.4 315V655M332 338.7H834M332 407.5H834M332 476.3H834M332 545.1H834M332 613.9H834" stroke="#6e6e6e" stroke-width="1.100" fill="none"/>
</g>
<rect x="332.500" y="314.500" width="501" height="341" fill="none" stroke="#000" stroke-width="1.100"/>
<path d="M379.8 310.500v3.500M379.8 655.500v3.500M482.2 310.500v3.500M482.2 655.500v3.500M584.6 310.500v3.500M584.6 655.500v3.500M687 310.500v3.500M687 655.500v3.500M789.4 310.500v3.500M789.4 655.500v3.500M328.500 338.7h3.500M834 338.7h3.500M328.500 407.5h3.500M834 407.5h3.500M328.500 476.3h3.500M834 476.3h3.500M328.500 545.1h3.500M834 545.1h3.500M328.500 613.9h3.500M834 613.9h3.500" stroke="#000" stroke-width="1.100" fill="none"/>
<text x="366.5" y="308.2" font-size="6.300" font-weight="bold" font-family="Liberation Sans, sans-serif" textLength="10" lengthAdjust="spacingAndGlyphs">110</text>
<text x="377.8" y="304.7" font-size="4" fill="#cfd3da" font-family="Liberation Sans, sans-serif">22'48&quot; E</text>
<text x="366.5" y="666.2" font-size="6.300" font-weight="bold" font-family="Liberation Sans, sans-serif" textLength="10" lengthAdjust="spacingAndGlyphs">110</text>
<text x="377.8" y="662.7" font-size="4" fill="#cfd3da" font-family="Liberation Sans, sans-serif">22'48&quot; E</text>
<text x="468.9" y="308.2" font-size="6.300" font-weight="bold" font-family="Liberation Sans, sans-serif" textLength="10" lengthAdjust="spacingAndGlyphs">110</text>
<text x="480.2" y="304.7" font-size="4" fill="#cfd3da" font-family="Liberation Sans, sans-serif">22'51&quot; E</text>
<text x="468.9" y="666.2" font-size="6.300" font-weight="bold" font-family="Liberation Sans, sans-serif" textLength="10" lengthAdjust="spacingAndGlyphs">110</text>
<text x="480.2" y="662.7" font-size="4" fill="#cfd3da" font-family="Liberation Sans, sans-serif">22'51&quot; E</text>
<text x="571.3" y="308.2" font-size="6.300" font-weight="bold" font-family="Liberation Sans, sans-serif" textLength="10" lengthAdjust="spacingAndGlyphs">110</text>
<text x="582.6" y="304.7" font-size="4" fill="#cfd3da" font-family="Liberation Sans, sans-serif">22'55&quot; E</text>
<text x="571.3" y="666.2" font-size="6.300" font-weight="bold" font-family="Liberation Sans, sans-serif" textLength="10" lengthAdjust="spacingAndGlyphs">110</text>
<text x="582.6" y="662.7" font-size="4" fill="#cfd3da" font-family="Liberation Sans, sans-serif">22'55&quot; E</text>
<text x="673.7" y="308.2" font-size="6.300" font-weight="bold" font-family="Liberation Sans, sans-serif" textLength="10" lengthAdjust="spacingAndGlyphs">110</text>
<text x="685" y="304.7" font-size="4" fill="#cfd3da" font-family="Liberation Sans, sans-serif">22'58&quot; E</text>
<text x="673.7" y="666.2" font-size="6.300" font-weight="bold" font-family="Liberation Sans, sans-serif" textLength="10" lengthAdjust="spacingAndGlyphs">110</text>
<text x="685" y="662.7" font-size="4" fill="#cfd3da" font-family="Liberation Sans, sans-serif">22'58&quot; E</text>
<text x="776.1" y="308.2" font-size="6.300" font-weight="bold" font-family="Liberation Sans, sans-serif" textLength="10" lengthAdjust="spacingAndGlyphs">110</text>
<text x="787.4" y="304.7" font-size="4" fill="#cfd3da" font-family="Liberation Sans, sans-serif">23'2&quot; E</text>
<text x="776.1" y="666.2" font-size="6.300" font-weight="bold" font-family="Liberation Sans, sans-serif" textLength="10" lengthAdjust="spacingAndGlyphs">110</text>
<text x="787.4" y="662.7" font-size="4" fill="#cfd3da" font-family="Liberation Sans, sans-serif">23'2&quot; E</text>
<text transform="translate(325,349.2) rotate(-90)" font-size="5.500" font-weight="bold" fill="#1a2a5a" font-family="Liberation Sans, sans-serif">-7</text>
<text transform="translate(323,342.2) rotate(-90)" font-size="4" fill="#cfd3da" font-family="Liberation Sans, sans-serif">45'42&quot; S</text>
<text transform="translate(842,349.2) rotate(-90)" font-size="5.500" font-weight="bold" fill="#1a2a5a" font-family="Liberation Sans, sans-serif">-7</text>
<text transform="translate(840,342.2) rotate(-90)" font-size="4" fill="#cfd3da" font-family="Liberation Sans, sans-serif">45'42&quot; S</text>
<text transform="translate(325,418) rotate(-90)" font-size="5.500" font-weight="bold" fill="#1a2a5a" font-family="Liberation Sans, sans-serif">-7</text>
<text transform="translate(323,411) rotate(-90)" font-size="4" fill="#cfd3da" font-family="Liberation Sans, sans-serif">45'46&quot; S</text>
<text transform="translate(842,418) rotate(-90)" font-size="5.500" font-weight="bold" fill="#1a2a5a" font-family="Liberation Sans, sans-serif">-7</text>
<text transform="translate(840,411) rotate(-90)" font-size="4" fill="#cfd3da" font-family="Liberation Sans, sans-serif">45'46&quot; S</text>
<text transform="translate(325,486.8) rotate(-90)" font-size="5.500" font-weight="bold" fill="#1a2a5a" font-family="Liberation Sans, sans-serif">-7</text>
<text transform="translate(323,479.8) rotate(-90)" font-size="4" fill="#cfd3da" font-family="Liberation Sans, sans-serif">45'49&quot; S</text>
<text transform="translate(842,486.8) rotate(-90)" font-size="5.500" font-weight="bold" fill="#1a2a5a" font-family="Liberation Sans, sans-serif">-7</text>
<text transform="translate(840,479.8) rotate(-90)" font-size="4" fill="#cfd3da" font-family="Liberation Sans, sans-serif">45'49&quot; S</text>
<text transform="translate(325,555.6) rotate(-90)" font-size="5.500" font-weight="bold" fill="#1a2a5a" font-family="Liberation Sans, sans-serif">-7</text>
<text transform="translate(323,548.6) rotate(-90)" font-size="4" fill="#cfd3da" font-family="Liberation Sans, sans-serif">45'53&quot; S</text>
<text transform="translate(842,555.6) rotate(-90)" font-size="5.500" font-weight="bold" fill="#1a2a5a" font-family="Liberation Sans, sans-serif">-7</text>
<text transform="translate(840,548.6) rotate(-90)" font-size="4" fill="#cfd3da" font-family="Liberation Sans, sans-serif">45'53&quot; S</text>
<text transform="translate(325,624.4) rotate(-90)" font-size="5.500" font-weight="bold" fill="#1a2a5a" font-family="Liberation Sans, sans-serif">-7</text>
<text transform="translate(323,617.4) rotate(-90)" font-size="4" fill="#cfd3da" font-family="Liberation Sans, sans-serif">45'56&quot; S</text>
<text transform="translate(842,624.4) rotate(-90)" font-size="5.500" font-weight="bold" fill="#1a2a5a" font-family="Liberation Sans, sans-serif">-7</text>
<text transform="translate(840,617.4) rotate(-90)" font-size="4" fill="#cfd3da" font-family="Liberation Sans, sans-serif">45'56&quot; S</text></svg>
<div class="x" style="left:461.0px;top:231.41px;font-size:19.3px;line-height:27px;letter-spacing:0.852px;font-weight:bold;font-family:'Liberation Serif',serif;">GUNAAN LAHAN DIY YOGYAKARTA</div>
<div class="x" style="left:332px;top:230.4px;width:129px;text-align:right;font:bold 19.500px/27px 'Liberation Serif',serif;letter-spacing:1.700px">PETA PENG</div>
<!-- right -->
<div class="a" style="left:1132px;top:126px;width:212px;height:20px;background:linear-gradient(90deg,#c3d2e5,#d9e3f0);"></div>
<div class="x" style="left:1136.0px;top:129.24px;font-size:12px;line-height:17px;letter-spacing:-0.414px;">Create Features</div>
<svg class="a" style="left:1315px;top:131px;" width="9" height="10" viewBox="0 0 9 10"><path d="M2.500 0.500h4v5h-4zM1 5.500h7M4.500 5.500v4" fill="none" stroke="#000" stroke-width="1.200"/><path d="M5.500 1v4" stroke="#000"/></svg>
<svg class="a" style="left:1330px;top:132px;" width="9" height="9" viewBox="0 0 9 9"><path d="M1 1l7 7M8 1l-7 7" stroke="#000" stroke-width="1.500"/></svg>
<svg class="a" style="left:1139px;top:151px;" width="16" height="16" viewBox="0 0 16 16"><path d="M1 1h12l-4.500 5v7l-3-2V6z" fill="#e8e8e8" stroke="#a9a9a9"/><path d="M10 8h4M10 11h4M10 14h4" stroke="#a9a9a9" stroke-dasharray="2 1"/></svg>
<svg class="a" style="left:1159px;top:157px;" width="7" height="4" viewBox="0 0 7 4"><path d="M0 0h7l-3.500 4z" fill="#a9a9a9"/></svg>
<svg class="a" style="left:1172px;top:151px;" width="16" height="16" viewBox="0 0 16 16"><rect x=".500" y=".500" width="9" height="9" fill="#eee" stroke="#a9a9a9"/><rect x="4.500" y="3.500" width="11" height="12" fill="#f6f6f6" stroke="#a9a9a9"/><path d="M6 6h2M6 9h2M6 12h2M9.500 6h4M9.500 9h4M9.500 12h4" stroke="#a9a9a9"/></svg>
<div class="a" style="left:1192px;top:148px;width:106px;height:22px;background:#f0f0f0;border:1px solid #8e8e8e;"></div>
<div class="x" style="left:1196.0px;top:151.24px;font-size:12px;line-height:17px;letter-spacing:-0.505px;color:#6d6d6d;">&lt;Search&gt;</div>
<svg class="a" style="left:1287px;top:158px;" width="6" height="3" viewBox="0 0 6 3"><path d="M0 0h6l-3 3z" fill="#a9a9a9"/></svg>
<svg class="a" style="left:1301px;top:151px;" width="16" height="16" viewBox="0 0 16 16"><circle cx="8" cy="8" r="7.500" fill="#ececec" stroke="#c4c4c4"/><circle cx="7" cy="7" r="3" fill="none" stroke="#a9a9a9" stroke-width="1.300"/><path d="M9 9l3.500 3.500" stroke="#a9a9a9" stroke-width="1.600"/></svg>
<svg class="a" style="left:1323px;top:151px;" width="16" height="16" viewBox="0 0 16 16"><circle cx="8" cy="8" r="7.500" fill="#ececec" stroke="#c4c4c4"/><circle cx="7" cy="7" r="3" fill="none" stroke="#a9a9a9" stroke-width="1.300"/><path d="M9 9l3.500 3.500" stroke="#a9a9a9" stroke-width="1.600"/></svg>
<div class="a" style="left:1132px;top:172px;width:212px;height:430px;background:#f0f0f0;border:1px solid #828790;"></div>
<div class="x" style="left:1154.0px;top:182.24px;font-size:12px;line-height:17px;letter-spacing:-0.111px;color:#6d6d6d;">There are no templates to show.</div>
<div class="a" style="left:1203px;top:609px;width:68px;height:1px;background:#a0a0a0;"></div>
<svg class="a" style="left:1320px;top:604px;" width="11" height="11" viewBox="0 0 11 11"><rect x=".500" y=".500" width="10" height="10" fill="#fff" stroke="#000"/><path d="M3 2.500l2.500 2.500L8 2.500M3 5.500l2.500 2.500L8 5.500" fill="none" stroke="#000" stroke-width="1.200"/></svg>
<svg class="a" style="left:1332px;top:604px;" width="11" height="11" viewBox="0 0 11 11"><rect x=".500" y=".500" width="10" height="10" fill="#fff" stroke="#000"/><path d="M5.500 2v7" stroke="#000" stroke-width="1.200"/></svg>
<div class="a" style="left:1132px;top:617px;width:211px;height:100px;background:#f0f0f0;border-top:1px solid #999;border-left:1px solid #828790;"></div>
<svg class="a" style="left:1134px;top:621px;" width="16" height="16" viewBox="0 0 16 16"><rect x=".500" y="2.500" width="11" height="12" fill="#f4f4f4" stroke="#a9a9a9"/><path d="M2 5h2v2H2zM2 9h2v2H2zM6 6h4M6 10h4" fill="none" stroke="#a9a9a9" stroke-width=".800"/><path d="M9 7l5-5 1.500 1.500-5 5z" fill="#e3e3e3" stroke="#a9a9a9" stroke-width=".700"/></svg>
<div class="x" style="left:1150.0px;top:624.24px;font-size:12px;line-height:17px;letter-spacing:-0.395px;font-weight:bold;color:#6d6d6d;">Construction Tools</div>
<div class="x" style="left:1191.0px;top:653.24px;font-size:12px;line-height:17px;letter-spacing:-0.170px;color:#6d6d6d;">Select a template.</div>
<div class="a" style="left:1346px;top:129px;width:22px;height:67px;background:#f0f0f0;border:1px solid #9a9a9a;border-radius:3px 0 0 3px;"></div>
<svg class="a" style="left:1349px;top:132px;" width="16" height="16" viewBox="0 0 16 16"><rect x=".500" y=".500" width="14" height="11" fill="#fff" stroke="#444"/><rect x="1" y="1" width="13" height="2.500" fill="#2b5fb3"/><circle cx="10" cy="11" r="3.500" fill="#3a8ad6" stroke="#1d4f8f" stroke-width=".600"/><path d="M8.500 9.500c1.500 0 1.500 1.500 3 2-1 1.500-2.500 1.500-3 .5z" fill="#5db53a"/></svg>
<div class="x" style="left:1349px;top:152.500px;font-size:12px;line-height:14px;writing-mode:vertical-rl;letter-spacing:.2px;color:#222">Search</div>
<!-- bottom -->
<div class="a" style="left:0px;top:716px;width:1366px;height:21px;background:#f0f0f0;"></div>
<div class="x" style="left:3.0px;top:719.24px;font-size:12px;line-height:17px;letter-spacing:-0.227px;">Width: 6,997 cm  Height: 19,852 cm  Area: 138,894 sq cm</div>
<div class="x" style="left:1113.0px;top:719.24px;font-size:12px;line-height:17px;letter-spacing:-0.323px;">25,68  21,50 Centimeters</div>
<div class="a" style="left:703px;top:720px;width:1px;height:14px;background:#e4e4e4;"></div>
<div class="a" style="left:830px;top:720px;width:1px;height:14px;background:#e4e4e4;"></div>
<div class="a" style="left:853px;top:720px;width:1px;height:14px;background:#e4e4e4;"></div>
<div class="a" style="left:0px;top:736px;width:1366px;height:32px;background:#d2d2d2;"></div>
<div class="a" style="left:184px;top:736px;width:36.5px;height:32px;background:#ededed;"></div>
<div class="a" style="left:151px;top:764px;width:28px;height:2px;background:#5a5a5a;"></div>
<div class="a" style="left:184px;top:764px;width:36.5px;height:2px;background:#4a4a4a;"></div>
<svg class="a" style="left:9px;top:744px;" width="18" height="18" viewBox="0 0 18 18"><path d="M0 2.500l7-1v7H0zM8 1.300l9-1.300v8.500H8zM0 9.500h7v7l-7-1zM8 9.500h9V18l-9-1.300z" fill="#000"/></svg>
<svg class="a" style="left:45px;top:743px;" width="18" height="19" viewBox="0 0 18 19"><circle cx="11" cy="7" r="5.500" fill="none" stroke="#000" stroke-width="1.600"/><path d="M7 11.500L1 18" stroke="#000" stroke-width="1.800"/></svg>
<svg class="a" style="left:81px;top:744px;" width="17" height="17" viewBox="0 0 17 17"><circle cx="8.500" cy="8.500" r="6.800" fill="none" stroke="#000" stroke-width="2.300"/></svg>
<svg class="a" style="left:117px;top:744px;" width="18" height="16" viewBox="0 0 18 16"><path d="M1 .500h9.500M1 14.500h9.500" stroke="#000" stroke-width="1.200"/><rect x="2.500" y="4.500" width="8" height="6" fill="none" stroke="#000" stroke-width="1.200"/><path d="M15 0v3M15 8v6.500" stroke="#000" stroke-width="1.300"/><rect x="14" y="4" width="2.200" height="3" fill="#000"/></svg>
<svg class="a" style="left:155px;top:742px;" width="21" height="18" viewBox="0 0 21 18"><path d="M1 2h7l2 2h10v3H1z" fill="#e8a33a"/><path d="M1 5h19v12H1z" fill="#f8d774"/><path d="M5 10h11v7H5z" fill="#2d8fe0"/><path d="M8 13h5v4H8z" fill="#f8d774"/></svg>
<svg class="a" style="left:193px;top:741.5px;" width="19" height="19" viewBox="0 0 19 19"><circle cx="9" cy="9" r="8" fill="#173f73"/><path d="M2.500 5c2-2.500 6-3.500 9-2 2 1 3.500 2.500 4 4 .8 3 0 5.500-2.500 6.500-3 1.500-6 1-8.500-1S.500 8 2.500 5z" fill="#2f9a4a"/><path d="M3 11c2 3 6 4.500 9 3" stroke="#1d5fa8" stroke-width="2" fill="none"/><circle cx="8" cy="8" r="4.300" fill="#9fd8f2" stroke="#e4ebef" stroke-width="1.200"/><path d="M6 7c1-1.500 3-1.500 4 0" stroke="#5ab86a" stroke-width="1.500" fill="none"/><path d="M11.500 11.500l5.500 5.500" stroke="#c8763a" stroke-width="2.600" stroke-linecap="round"/></svg>
<div class="a" style="left:231px;top:743px;width:16px;height:16px;background:#4a2a05;border:1px solid #f39a1f;"></div>
<div class="x" style="left:234.0px;top:746.28px;font-size:9px;line-height:13px;letter-spacing:0.000px;font-weight:bold;color:#f7a52a;">Ai</div>
<div class="a" style="left:267px;top:742.5px;width:17px;height:17px;background:#4a8cf7;border-radius:5px;"></div>
<svg class="a" style="left:270px;top:747.5px;" width="11" height="7" viewBox="0 0 11 7"><rect x="0" y="0" width="7" height="7" rx="1.500" fill="#fff"/><path d="M7.500 3l3.500-2.500v6L7.500 4z" fill="#fff"/></svg>
<svg class="a" style="left:304px;top:741.5px;" width="18" height="18" viewBox="0 0 18 18"><path d="M9 .500a8.500 8.500 0 1 0 7 13.500c-3 2-8 1-8-3 0-2 2-3.500 4-3.500 3 0 4 2 4.500 3C19 5 14 .500 9 .500z" fill="#1b7fd0"/><path d="M1 8C2 3 6 1 10 1.500c4 .5 6.500 3.500 6.500 6.500-1-3-4-4-7-3S5 9 6 12c-3-1-5-2-5-4z" fill="#35c1a0"/></svg>
<svg class="a" style="left:1122px;top:742px;" width="24" height="22" viewBox="0 0 24 22"><circle cx="10" cy="10" r="9.500" fill="#fff"/><circle cx="10" cy="10" r="8" fill="#2b78d0"/><circle cx="19" cy="17" r="4.500" fill="#2b78d0" stroke="#fff"/></svg>
<div class="x" style="left:1127.0px;top:743.20px;font-size:15px;line-height:21px;font-weight:bold;color:#fff;">?</div>
<div class="x" style="left:1140.0px;top:754.63px;font-size:8px;line-height:11px;font-weight:bold;color:#fff;">i</div>
<svg class="a" style="left:1153px;top:748px;" width="12" height="7" viewBox="0 0 12 7"><path d="M.5 6.500l5.500-5.500 5.500 5.500" fill="none" stroke="#000" stroke-width="1.300"/></svg>
<svg class="a" style="left:1175px;top:747px;" width="17" height="10" viewBox="0 0 17 10"><rect x=".500" y=".500" width="14" height="9" fill="none" stroke="#000"/><rect x="2.500" y="2.500" width="7" height="5" fill="#000"/><rect x="15" y="3" width="1.500" height="4" fill="#000"/></svg>
<svg class="a" style="left:1198px;top:743px;" width="18" height="18" viewBox="0 0 18 18"><circle cx="8" cy="8.500" r="7" fill="none" stroke="#000" stroke-width="1.100"/><ellipse cx="8" cy="8.500" rx="3" ry="7" fill="none" stroke="#000"/><path d="M1 8.500h14M2 5h12M2 12h9" stroke="#000" stroke-width=".900"/><circle cx="13.500" cy="14" r="3.200" fill="#d2d2d2" stroke="#000" stroke-width="1.100"/><path d="M11.500 16l4-4" stroke="#000"/></svg>
<svg class="a" style="left:1223px;top:745px;" width="17" height="14" viewBox="0 0 17 14"><path d="M1 5h3l4-4v12L4 9H1z" fill="none" stroke="#000" stroke-width="1.100"/><path d="M10.500 4.500c1.300 1.300 1.300 3.700 0 5" fill="none" stroke="#000"/><path d="M12.500 2.500c2.300 2.300 2.300 6.700 0 9" fill="none" stroke="#777"/><path d="M14.500 1c3 3 3 9 0 12" fill="none" stroke="#aaa"/></svg>
<div class="x" style="left:1264.0px;top:736.42px;font-size:11.5px;line-height:16px;letter-spacing:-0.156px;">17:25</div>
<div class="x" style="left:1249.0px;top:751.92px;font-size:11.5px;line-height:16px;letter-spacing:0.130px;">30/11/2020</div>
<svg class="a" style="left:1324px;top:743px;" width="17" height="16" viewBox="0 0 17 16"><path d="M.5.500h16v11.500h-7l-3 3.500v-3.500h-6z" fill="#000"/><path d="M3 3.500h11M3 6h11M3 8.500h8" stroke="#fff" stroke-width="1.100"/></svg>
<div class="a" style="left:1361px;top:736px;width:1px;height:32px;background:#9a9a9a;"></div>
<!-- menu -->
<div class="a" style="left:194px;top:50px;width:143px;height:255px;background:rgba(0,0,0,.22);filter:blur(1.500px);"></div>
<div class="a" style="left:190px;top:25px;width:45px;height:23px;background:#fff;border:1px solid #8f8f8f;border-bottom:none;"></div>
<div class="x" style="left:198.0px;top:28.24px;font-size:12px;line-height:17px;letter-spacing:-0.335px;">Insert</div>
<div class="a" style="left:190px;top:45px;width:144px;height:258px;background:#fff;border:1px solid #8f8f8f;"></div>
<div class="a" style="left:191px;top:45px;width:43px;height:2px;background:#fff;"></div>
<div class="a" style="left:191px;top:47px;width:26.5px;height:255px;background:linear-gradient(90deg,#f1f1f1 70%,#f8f8f8);"></div>
<div class="a" style="left:225px;top:70px;width:107.5px;height:1px;background:#c6c6c6;"></div>
<div class="a" style="left:225px;top:139px;width:107.5px;height:1px;background:#c6c6c6;"></div>
<div class="a" style="left:225px;top:164px;width:107.5px;height:1px;background:#c6c6c6;"></div>
<div class="a" style="left:225px;top:255.5px;width:107.5px;height:1px;background:#c6c6c6;"></div>
<div class="a" style="left:192px;top:188px;width:140px;height:22px;background:#b7d8f4;border:1px solid #3b95e6;"></div>
<div class="x" style="left:225.0px;top:50.24px;font-size:12px;line-height:17px;letter-spacing:-0.335px;">Data Frame</div>
<div class="x" style="left:225.0px;top:75.04px;font-size:12px;line-height:17px;letter-spacing:-0.045px;">Title</div>
<div class="x" style="left:225.0px;top:96.74px;font-size:12px;line-height:17px;letter-spacing:-0.252px;">Text</div>
<div class="x" style="left:225.0px;top:118.84px;font-size:12px;line-height:17px;letter-spacing:-0.150px;">Dynamic Text</div>
<div class="x" style="left:225.0px;top:143.84px;font-size:12px;line-height:17px;letter-spacing:-0.185px;">Neatline...</div>
<div class="x" style="left:225.0px;top:168.84px;font-size:12px;line-height:17px;letter-spacing:-0.338px;">Legend...</div>
<div class="x" style="left:225.0px;top:191.24px;font-size:12px;line-height:17px;letter-spacing:0.165px;">North Arrow...</div>
<div class="x" style="left:225.0px;top:213.24px;font-size:12px;line-height:17px;letter-spacing:0.053px;">Scale Bar...</div>
<div class="x" style="left:225.0px;top:235.24px;font-size:12px;line-height:17px;letter-spacing:0.066px;">Scale Text...</div>
<div class="x" style="left:225.0px;top:259.74px;font-size:12px;line-height:17px;letter-spacing:0.065px;">Picture...</div>
<div class="x" style="left:225.0px;top:282.24px;font-size:12px;line-height:17px;letter-spacing:-0.076px;">Object...</div>
<svg class="a" style="left:321px;top:123px;" width="5" height="8" viewBox="0 0 5 8"><path d="M0 0l4.500 4-4.500 4z" fill="#000"/></svg>
<svg class="a" style="left:196px;top:50.5px;" width="17" height="17" viewBox="0 0 16 16"><path d="M1 11.500l4-2.500h10l-4 2.500zM1 8l4-2.500h10L11 8zM1 4.500L5 2h10l-4 2.500z" fill="#f3c66a" stroke="#c08a2a" stroke-width=".800"/></svg>
<div class="x" style="left:196.0px;top:78.47px;font-size:7px;line-height:10px;letter-spacing:0.147px;font-weight:bold;color:#1a56a8;text-decoration:underline;">Title</div>
<div class="x" style="left:197.5px;top:92.66px;font-size:18px;line-height:25px;letter-spacing:0.001px;font-weight:bold;color:#222;font-family:'Liberation Serif',serif;">A</div>
<div class="a" style="left:197px;top:145px;width:14px;height:14px;background:#fff;border:1.400px solid #111;"></div>
<svg class="a" style="left:196px;top:169px;" width="16" height="16" viewBox="0 0 16 16"><rect x="1" y="1" width="2" height="2" fill="#4a8ad6"/><rect x="1" y="5" width="2" height="2" fill="#8ab83a"/><rect x="1" y="9" width="2" height="2" fill="#e0a030"/><path d="M0 15l2-3 2 3z" fill="#c06030"/><path d="M6 2h8M6 6h6M6 10h9M6 14h7" stroke="#1d5f9f" stroke-width="1.200"/></svg>
<svg class="a" style="left:199.5px;top:192px;" width="9.5" height="14" viewBox="0 0 14 17"><path d="M7 0l4.500 4.500H9V7H5V4.500H2.500z" fill="#1d5f9f"/><path d="M3 16V9l7 6V9" fill="none" stroke="#1d5f9f" stroke-width="2"/></svg>
<svg class="a" style="left:196px;top:214px;" width="16" height="14" viewBox="0 0 16 14"><rect x=".500" y="6.500" width="14" height="5" fill="#fff" stroke="#1d5f9f"/><rect x="1" y="7" width="4" height="2" fill="#1d5f9f"/><rect x="9" y="7" width="5" height="2" fill="#1d5f9f"/><rect x="5" y="9" width="4" height="2" fill="#1d5f9f"/><rect x="1" y="1" width="2" height="3" fill="#1d5f9f"/><rect x="7" y="1" width="2" height="3" fill="#1d5f9f"/><rect x="11" y="1" width="1" height="3" fill="#1d5f9f"/><rect x="13" y="1" width="2" height="3" fill="#1d5f9f"/></svg>
<div class="x" style="left:196.0px;top:236.59px;font-size:11px;line-height:15px;letter-spacing:-0.167px;font-weight:bold;color:#1d5f9f;">1:n</div>
<svg class="a" style="left:196px;top:260px;" width="16" height="16" viewBox="0 0 16 16"><rect x=".500" y=".500" width="15" height="14" fill="#fff" stroke="#5a5a5a"/><rect x="2" y="2" width="12" height="11" fill="#b7d8f4"/><path d="M2 11c3-3 5-1 7-2s3-1 5 0v3H2z" fill="#7aa86a"/></svg>
<svg class="a" style="left:196px;top:282px;" width="16" height="17" viewBox="0 0 16 17"><path d="M1.500 1.500h9l4 4v10h-13z" fill="#fff" stroke="#6a6a6a"/><path d="M10.500 1.500v4h4" fill="none" stroke="#6a6a6a"/><rect x="3.500" y="8.500" width="8" height="6" fill="#8ab83a" stroke="#3a6a1a"/><rect x="5" y="10" width="2.500" height="3" fill="#f0c040"/><rect x="8" y="10" width="2.500" height="3" fill="#e08030"/></svg>
<div class="a" style="left:257px;top:217px;width:208px;height:55px;background:rgba(0,0,0,.25);filter:blur(1.500px);"></div>
<div class="a" style="left:254px;top:213.5px;width:208.5px;height:55.5px;background:linear-gradient(#fdfdfe,#dbe6f4);border:1px solid #767676;border-radius:2px;"></div>
<div class="x" style="left:259.0px;top:220.24px;font-size:12px;line-height:17px;letter-spacing:0.135px;font-weight:bold;color:#4c4c4c;">Insert North Arrow</div>
<div class="x" style="left:267.0px;top:244.24px;font-size:12px;line-height:17px;letter-spacing:-0.041px;color:#4c4c4c;">Insert a north arrow in Layout view</div>
</div>
</body>
</html>
